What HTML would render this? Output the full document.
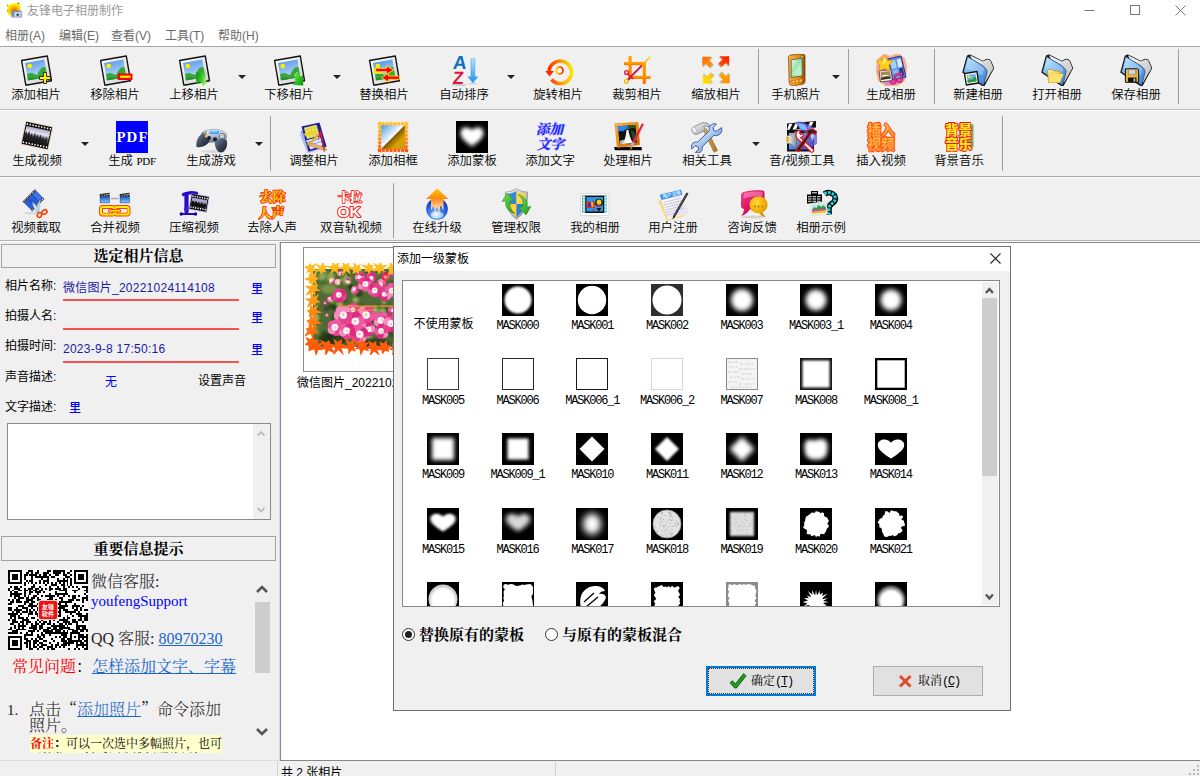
<!DOCTYPE html><html lang="zh-CN"><head><meta charset="utf-8"><title>友锋电子相册制作</title><style>
*{box-sizing:border-box;margin:0;padding:0}
html,body{width:1200px;height:776px;overflow:hidden;background:#fff}
body{position:relative;font-family:"Liberation Sans","Noto Sans CJK SC",sans-serif;font-size:12px;color:#000}
.abs{position:absolute}
.title{left:27px;top:2px;font-size:12px;color:#999;line-height:18px}
.menu{top:26px;left:0;height:20px;width:1200px}
.menu span{position:absolute;top:1px;line-height:19px;color:#6a6a6a;font-size:12px;white-space:nowrap}
.tbar{left:0;width:1200px;background:#f0f0f0}
.hl{left:0;width:1200px;height:1px}
.btn{position:absolute;width:100px;margin-left:-50px;text-align:center;white-space:nowrap;font-size:12px;line-height:14px;color:#000}
.btn svg{display:block;margin:0 auto;width:32px;height:32px}
.btn .lb{display:block;font-size:12.4px;font-weight:350}
.arr{position:absolute;width:0;height:0;border-left:4px solid transparent;border-right:4px solid transparent;border-top:4px solid #222}
.vsep{position:absolute;width:1px;background:#a0a0a0}
.hdr{left:1px;width:275px;height:24px;border:1px solid #a3a3a3;background:#f0f0f0;text-align:center;font-family:"Liberation Serif","Noto Serif CJK SC",serif;font-weight:bold;font-size:15px;line-height:23px}
.lab{position:absolute;font-size:12px;line-height:14px;white-space:nowrap}
.blue{color:#1a1aa6;letter-spacing:.25px}
.link{color:#0000ff;font-weight:500}
.cjk{font-family:"Noto Serif CJK SC",serif}
.redl{position:absolute;height:2px;background:#f65252;left:63px;width:176px}
.serif{font-family:"Liberation Serif","Noto Serif CJK SC",serif}
.mk{position:absolute;width:32px;height:32px;background:#000;overflow:hidden}
.ml{position:absolute;width:90px;margin-left:-45px;text-align:center;font-family:"Liberation Mono","Noto Serif CJK SC",monospace;font-size:12px;letter-spacing:-1.2px;line-height:12px;white-space:nowrap;color:#000}
</style></head><body>
<div class="abs" style="left:6px;top:3px;width:16px;height:16px"><svg viewBox="0 0 16 16" width="16" height="16" style="overflow:visible"><defs><radialGradient id="apg" cx=".55" cy=".6" r=".6"><stop offset="0" stop-color="#e85a00"/><stop offset=".35" stop-color="#ff9a00"/><stop offset=".7" stop-color="#ffe000"/><stop offset="1" stop-color="#ffff20"/></radialGradient><linearGradient id="apc" x1="0" y1="0" x2="1" y2="1"><stop offset="0" stop-color="#8aa0d0"/><stop offset=".5" stop-color="#c4d0e8"/><stop offset="1" stop-color="#98a8c8"/></linearGradient></defs><path d="M1 1.800L11.500-.2l2.800 2 .2 9-2.500 2-9.500-.3-1.200-4z" fill="url(#apg)"/><path d="M1 1.500l1.200.8-.8 1zM11 .2l2-.6 .6 1.600zM1.200 7l1.300.6-.8 1.200z" fill="#2a6a1a"/><rect x="5.400" y="7.900" width="10.400" height="6.400" rx=".7" fill="url(#apc)" stroke="#7a88a8" stroke-width=".5"/><rect x="6.500" y="8.600" width="1.300" height="5" fill="#5a6a98"/><rect x="9" y="9.300" width="4.800" height="4" fill="#d0daf0"/><path d="M10 12.500l1.300-2.300 1.700 1.300v1.300z" fill="#2a3450"/><rect x="9" y="8.200" width="5.500" height=".8" fill="#4a7ad8"/></svg></div>
<div class="abs title">友锋电子相册制作</div>
<svg class="abs" style="left:1070px;top:0" width="130" height="22" viewBox="0 0 130 22"><g stroke="#777" stroke-width="1" fill="none"><path d="M14.5 10.5h10"/><rect x="60.500" y="5.500" width="9" height="9"/><path d="M105.500 5.500l10 10M115.500 5.500l-10 10"/></g></svg>
<div class="abs menu">
<span style="left:5px">相册(A)</span>
<span style="left:59px">编辑(E)</span>
<span style="left:111px">查看(V)</span>
<span style="left:165px">工具(T)</span>
<span style="left:218px">帮助(H)</span>
</div>
<div class="abs tbar" style="top:46px;height:197px"></div>
<div class="abs hl" style="top:46px;background:#a5a5a5"></div>
<div class="abs hl" style="top:109px;background:#bdbdbd"></div>
<div class="abs hl" style="top:110px;background:#fbfbfb"></div>
<div class="abs hl" style="top:176px;background:#a8a8a8"></div>
<div class="abs hl" style="top:177px;background:#fbfbfb"></div>
<div class="abs hl" style="top:240px;background:#b4b4b4"></div>
<div class="abs hl" style="top:241px;background:#fbfbfb"></div>
<div class="btn" style="left:36px;top:54px"><svg viewBox="0 0 32 32" width="32" height="32" ><defs><linearGradient id="g1" x1="0" y1="0" x2="0.3" y2="1"><stop offset="0" stop-color="#4f93e6"/><stop offset="1" stop-color="#c4def8"/></linearGradient><linearGradient id="g2" x1="0" y1="0" x2="1" y2="1"><stop offset="0" stop-color="#fff"/><stop offset="1" stop-color="#cfcfcf"/></linearGradient><clipPath id="g3"><path d="M5 8.200L24.300 4.800 27.300 22.300 8 25.800z"/></clipPath></defs><g transform="translate(0 .8)"><path d="M6.500 31.200L32 26.800 32 25 6 29.500z" fill="#000" opacity=".55"/><path d="M1.600 5.700L27.300 1.200 31.500 25.800 5.800 30.300z" fill="url(#g2)" stroke="#111" stroke-width="1.400" stroke-linejoin="round"/><path d="M5 8.200L24.300 4.800 27.300 22.300 8 25.800z" fill="url(#g1)"/><g clip-path="url(#g3)"><path d="M5 21.500c2.500-3 5-4 7.500-3 1.500.5 3 1.300 4.500 1.700 2-3.500 4-8 7-8 1.500 0 3 1.500 4 4v12H6z" fill="#36a83a"/><path d="M6 24c4-1.500 8-1.500 11-.5 3-1.500 7-2.500 11-2v6H7z" fill="#228a2c" opacity=".85"/></g><circle cx="9.700" cy="11.200" r="2.300" fill="#fff200"/></g><path d="M19.500 22.500h4v-4h3v4h4v3h-4v4h-3v-4h-4z" fill="#fff200" stroke="#222" stroke-width=".9" stroke-linejoin="round"/></svg><span class="lb" style="margin-top:1.6px">添加相片</span></div>
<div class="btn" style="left:115px;top:54px"><svg viewBox="0 0 32 32" width="32" height="32" style="overflow:visible"><defs><linearGradient id="g4" x1="0" y1="0" x2="0.3" y2="1"><stop offset="0" stop-color="#4f93e6"/><stop offset="1" stop-color="#c4def8"/></linearGradient><linearGradient id="g5" x1="0" y1="0" x2="1" y2="1"><stop offset="0" stop-color="#fff"/><stop offset="1" stop-color="#cfcfcf"/></linearGradient><clipPath id="g6"><path d="M5 8.200L24.300 4.800 27.300 22.300 8 25.800z"/></clipPath></defs><g transform="translate(0 .8)"><path d="M6.500 31.200L32 26.800 32 25 6 29.500z" fill="#000" opacity=".55"/><path d="M1.600 5.700L27.300 1.200 31.500 25.800 5.800 30.300z" fill="url(#g5)" stroke="#111" stroke-width="1.400" stroke-linejoin="round"/><path d="M5 8.200L24.300 4.800 27.300 22.300 8 25.800z" fill="url(#g4)"/><g clip-path="url(#g6)"><path d="M5 21.500c2.500-3 5-4 7.500-3 1.500.5 3 1.300 4.500 1.700 2-3.500 4-8 7-8 1.500 0 3 1.500 4 4v12H6z" fill="#36a83a"/><path d="M6 24c4-1.500 8-1.500 11-.5 3-1.500 7-2.500 11-2v6H7z" fill="#228a2c" opacity=".85"/></g><circle cx="9.700" cy="11.200" r="2.300" fill="#fff200"/></g><rect x="18.500" y="19.500" width="15" height="6.500" rx="1" fill="#f00"/><rect x="21" y="21.600" width="10.500" height="2.300" fill="#ffef00"/></svg><span class="lb" style="margin-top:1.6px">移除相片</span></div>
<div class="btn" style="left:194px;top:54px"><svg viewBox="0 0 32 32" width="32" height="32" style="overflow:visible"><defs><linearGradient id="g7" x1="0" y1="0" x2="0.3" y2="1"><stop offset="0" stop-color="#4f93e6"/><stop offset="1" stop-color="#c4def8"/></linearGradient><linearGradient id="g8" x1="0" y1="0" x2="1" y2="1"><stop offset="0" stop-color="#fff"/><stop offset="1" stop-color="#cfcfcf"/></linearGradient><clipPath id="g9"><path d="M5 8.200L24.300 4.800 27.300 22.300 8 25.800z"/></clipPath></defs><g transform="translate(0 .8)"><path d="M6.500 31.200L32 26.800 32 25 6 29.500z" fill="#000" opacity=".55"/><path d="M1.600 5.700L27.300 1.200 31.500 25.800 5.800 30.300z" fill="url(#g8)" stroke="#111" stroke-width="1.400" stroke-linejoin="round"/><path d="M5 8.200L24.300 4.800 27.300 22.300 8 25.800z" fill="url(#g7)"/><g clip-path="url(#g9)"><path d="M5 21.500c2.500-3 5-4 7.500-3 1.500.5 3 1.300 4.500 1.700 2-3.500 4-8 7-8 1.500 0 3 1.500 4 4v12H6z" fill="#36a83a"/><path d="M6 24c4-1.500 8-1.500 11-.5 3-1.500 7-2.500 11-2v6H7z" fill="#228a2c" opacity=".85"/></g><circle cx="9.700" cy="11.200" r="2.300" fill="#fff200"/></g><defs><linearGradient id="upg" x1="0" y1="0" x2="1" y2=".3"><stop offset="0" stop-color="#089008"/><stop offset=".6" stop-color="#3cc828"/><stop offset="1" stop-color="#8af060"/></linearGradient></defs><path d="M18.200 18.200L28.500 19.200 26.200 22.800c1.600 2 2.200 4.300 1.800 6.700L24.900 32.100c.2-1.800-.8-3-3.100-4.100L18.200 29.500z" fill="url(#upg)"/></svg><span class="lb" style="margin-top:1.6px">上移相片</span></div>
<div class="btn" style="left:289px;top:54px"><svg viewBox="0 0 32 32" width="32" height="32" style="overflow:visible"><defs><linearGradient id="g10" x1="0" y1="0" x2="0.3" y2="1"><stop offset="0" stop-color="#4f93e6"/><stop offset="1" stop-color="#c4def8"/></linearGradient><linearGradient id="g11" x1="0" y1="0" x2="1" y2="1"><stop offset="0" stop-color="#fff"/><stop offset="1" stop-color="#cfcfcf"/></linearGradient><clipPath id="g12"><path d="M5 8.200L24.300 4.800 27.300 22.300 8 25.800z"/></clipPath></defs><g transform="translate(0 .8)"><path d="M6.500 31.200L32 26.800 32 25 6 29.500z" fill="#000" opacity=".55"/><path d="M1.600 5.700L27.300 1.200 31.500 25.800 5.800 30.300z" fill="url(#g11)" stroke="#111" stroke-width="1.400" stroke-linejoin="round"/><path d="M5 8.200L24.300 4.800 27.300 22.300 8 25.800z" fill="url(#g10)"/><g clip-path="url(#g12)"><path d="M5 21.500c2.500-3 5-4 7.500-3 1.500.5 3 1.300 4.500 1.700 2-3.500 4-8 7-8 1.500 0 3 1.500 4 4v12H6z" fill="#36a83a"/><path d="M6 24c4-1.500 8-1.500 11-.5 3-1.500 7-2.500 11-2v6H7z" fill="#228a2c" opacity=".85"/></g><circle cx="9.700" cy="11.200" r="2.300" fill="#fff200"/></g><defs><linearGradient id="dng" x1="0" y1="0" x2="1" y2="1"><stop offset="0" stop-color="#90f468"/><stop offset=".5" stop-color="#3cc828"/><stop offset="1" stop-color="#089008"/></linearGradient></defs><path d="M23.800 17.100c1.800 1.500 2.800 3.400 3.100 5.700L30 21.300 30.300 31.600 19.700 31 22.300 27.400c-.4-2.800-.9-5-1.600-7.200z" fill="url(#dng)"/><path d="M23.800 17.100l-3.100 3.100" stroke="#444" stroke-width=".8" opacity=".7"/></svg><span class="lb" style="margin-top:1.6px">下移相片</span></div>
<div class="btn" style="left:384px;top:54px"><svg viewBox="0 0 32 32" width="32" height="32" style="overflow:visible"><defs><linearGradient id="g13" x1="0" y1="0" x2="0.3" y2="1"><stop offset="0" stop-color="#3f8fe6"/><stop offset="1" stop-color="#c4def8"/></linearGradient><linearGradient id="g14" x1="0" y1="0" x2="1" y2="1"><stop offset="0" stop-color="#fff"/><stop offset="1" stop-color="#cfcfcf"/></linearGradient><clipPath id="g15"><path d="M5 8.200L24.300 4.800 27.300 22.300 8 25.800z"/></clipPath></defs><g transform="translate(0 .8)"><path d="M6.500 31.200L32 26.800 32 25 6 29.500z" fill="#000" opacity=".55"/><path d="M1.600 5.700L27.300 1.200 31.500 25.800 5.800 30.300z" fill="url(#g14)" stroke="#111" stroke-width="1.400" stroke-linejoin="round"/><path d="M5 8.200L24.300 4.800 27.300 22.300 8 25.800z" fill="url(#g13)"/><g clip-path="url(#g15)"><path d="M5 21.500c2.500-3 5-4 7.500-3 1.500.5 3 1.300 4.500 1.700 2-3.500 4-8 7-8 1.500 0 3 1.500 4 4v12H6z" fill="#36a83a"/><path d="M6 24c4-1.500 8-1.500 11-.5 3-1.500 7-2.500 11-2v6H7z" fill="#228a2c" opacity=".85"/></g><circle cx="9.700" cy="11.200" r="2.300" fill="#fff200"/></g><rect x="5.500" y="14" width="9" height="6" fill="#f2e21a" opacity=".9"/><path d="M7.500 14.300h11v-2.600l7 4.300-7 4.300v-2.600h-11z" fill="#f00" stroke="#ffe600" stroke-width=".9"/><path d="M31.500 22h-11v-2.600l-7 4.300 7 4.300v-2.600h11z" fill="#f00" stroke="#ffe600" stroke-width=".9"/></svg><span class="lb" style="margin-top:1.6px">替换相片</span></div>
<div class="btn" style="left:464px;top:54px"><svg viewBox="0 0 32 32" width="32" height="32" ><defs><linearGradient id="srt" x1="0" y1="0" x2="0" y2="1"><stop offset="0" stop-color="#b8e6ff"/><stop offset="1" stop-color="#1c8df0"/></linearGradient></defs><ellipse cx="11" cy="30.800" rx="8" ry="1.200" fill="#000" opacity=".15"/><ellipse cx="24.800" cy="29.500" rx="4.500" ry="1" fill="#000" opacity=".12"/><text x="11.200" y="15.300" font-family="Liberation Sans,sans-serif" font-weight="bold" font-size="18.800" text-anchor="middle" fill="#0b6dc4" transform="skewX(-6) translate(1.600 0)">A</text><text x="10.500" y="30.400" font-family="Liberation Sans,sans-serif" font-weight="bold" font-size="17.800" text-anchor="middle" fill="#e3123c" transform="skewX(-6) translate(2.500 0)">Z</text><path d="M23 4.800h3.800v18h3l-4.900 6-4.900-6h3z" fill="url(#srt)" stroke="#2a98f0" stroke-width=".5"/></svg><span class="lb" style="margin-top:1.6px">自动排序</span></div>
<div class="btn" style="left:558px;top:54px"><svg viewBox="0 0 32 32" width="32" height="32" ><defs><linearGradient id="rot" x1="0" y1="0" x2="1" y2="0"><stop offset="0" stop-color="#ff3000"/><stop offset=".5" stop-color="#ff9400"/><stop offset="1" stop-color="#ffe000"/></linearGradient><linearGradient id="rot2" x1="0" y1="0" x2="1" y2="0"><stop offset="0" stop-color="#ffd800"/><stop offset="1" stop-color="#ff2a00"/></linearGradient></defs><path d="M7 18.500A11.250 11.250 0 1 1 9.600 25.500" fill="none" stroke="url(#rot)" stroke-width="3.600"/><path d="M3.200 17l8.800 0-4.400 5.600z" fill="#ff3000"/><circle cx="17.600" cy="16.400" r="3.400" fill="#f4f4f4" stroke="url(#rot2)" stroke-width="1.800"/></svg><span class="lb" style="margin-top:1.6px">旋转相片</span></div>
<div class="btn" style="left:637px;top:54px"><svg viewBox="0 0 32 32" width="32" height="32" ><defs><linearGradient id="crp" x1="0" y1="0" x2="0" y2="1"><stop offset="0" stop-color="#ffa800"/><stop offset="1" stop-color="#ff7400"/></linearGradient><linearGradient id="crl" x1="1" y1="0" x2="0" y2="1"><stop offset="0" stop-color="#ffe000"/><stop offset=".5" stop-color="#ff8000"/><stop offset=".8" stop-color="#7a1fa0"/><stop offset="1" stop-color="#e00020"/></linearGradient></defs><g fill="url(#crp)"><rect x="7.500" y="2" width="3.200" height="22"/><rect x="3" y="8" width="22" height="3.200"/><rect x="21.700" y="8" width="3.200" height="22"/><rect x="7.500" y="21.800" width="22" height="3.200"/></g><path d="M29.500 2.500L7 25.500" stroke="url(#crl)" stroke-width="1.300" fill="none"/><path d="M21 11.500L7 25.500" stroke="#c02060" stroke-width="1.800" fill="none"/><circle cx="5.500" cy="18.500" r="1.900" fill="none" stroke="#e8102a" stroke-width="1.300"/><circle cx="5.500" cy="27.200" r="1.900" fill="none" stroke="#f2b800" stroke-width="1.300"/><path d="M6.500 20l6 5M7 26l4-3" stroke="#e8102a" stroke-width="1.200" fill="none"/></svg><span class="lb" style="margin-top:1.6px">裁剪相片</span></div>
<div class="btn" style="left:716px;top:54px"><svg viewBox="0 0 32 32" width="32" height="32" ><defs><linearGradient id="g16" x1="0" y1="0" x2="1" y2="1"><stop offset="0" stop-color="#ff6a00"/><stop offset="1" stop-color="#ff9a00"/></linearGradient></defs><g transform="rotate(0 16 16)"><path d="M2.300 2.800h9.700l-3.200 3.200 4.200 4.200-3.400 3.400-4.200-4.200-3.100 3.100z" fill="#000" opacity=".22" transform="translate(.8 .9)"/><path d="M2.300 2.800h9.700l-3.200 3.200 4.200 4.200-3.400 3.400-4.200-4.200-3.100 3.100z" fill="url(#g16)"/></g><defs><linearGradient id="g17" x1="0" y1="0" x2="1" y2="1"><stop offset="0" stop-color="#ff1a00"/><stop offset="1" stop-color="#ff5a00"/></linearGradient></defs><g transform="rotate(90 16 16)"><path d="M2.300 2.800h9.700l-3.200 3.200 4.200 4.200-3.400 3.400-4.200-4.200-3.100 3.100z" fill="#000" opacity=".22" transform="translate(.8 .9)"/><path d="M2.300 2.800h9.700l-3.200 3.200 4.200 4.200-3.400 3.400-4.200-4.200-3.100 3.100z" fill="url(#g17)"/></g><defs><linearGradient id="g18" x1="0" y1="0" x2="1" y2="1"><stop offset="0" stop-color="#ffe600"/><stop offset="1" stop-color="#ffc400"/></linearGradient></defs><g transform="rotate(270 16 16)"><path d="M2.300 2.800h9.700l-3.200 3.200 4.200 4.200-3.400 3.400-4.200-4.200-3.100 3.100z" fill="#000" opacity=".22" transform="translate(.8 .9)"/><path d="M2.300 2.800h9.700l-3.200 3.200 4.200 4.200-3.400 3.400-4.200-4.200-3.100 3.100z" fill="url(#g18)"/></g><defs><linearGradient id="g19" x1="0" y1="0" x2="1" y2="1"><stop offset="0" stop-color="#ff8a00"/><stop offset="1" stop-color="#ffb000"/></linearGradient></defs><g transform="rotate(180 16 16)"><path d="M2.300 2.800h9.700l-3.200 3.200 4.200 4.200-3.400 3.400-4.200-4.200-3.100 3.100z" fill="#000" opacity=".22" transform="translate(.8 .9)"/><path d="M2.300 2.800h9.700l-3.200 3.200 4.200 4.200-3.400 3.400-4.200-4.200-3.100 3.100z" fill="url(#g19)"/></g></svg><span class="lb" style="margin-top:1.6px">缩放相片</span></div>
<div class="btn" style="left:796px;top:54px"><svg viewBox="0 0 32 32" width="32" height="32" ><defs><linearGradient id="ph1" x1="0" y1="0" x2="1" y2="0"><stop offset="0" stop-color="#ffb74a"/><stop offset=".6" stop-color="#f08a1a"/><stop offset="1" stop-color="#8a4a08"/></linearGradient><linearGradient id="ph2" x1="0" y1="0" x2="1" y2="1"><stop offset="0" stop-color="#e9fff0"/><stop offset=".5" stop-color="#8fdca8"/><stop offset="1" stop-color="#d8ffe4"/></linearGradient></defs><path d="M8.500 3.500c0-1.500 1-2.300 2.500-2.500l11-1c2-.2 3 .8 3 2.500v24.500c0 2-1 3-2.500 3.300l-9 1.500c-2.500.3-4-.7-4.300-3z" fill="url(#ph1)" stroke="#7a4206" stroke-width=".8"/><path d="M11.200 5.800l11-1.500v17.500l-11 1.800z" fill="url(#ph2)" stroke="#4a5a3a" stroke-width=".8"/><path d="M11.500 21l9-13v13z" fill="#bff0cc" opacity=".8"/><path d="M10.500 26.500l12-2v3.500l-9 1.800c-1.800.2-2.800-1-3-3.300z" fill="#d87a10"/><circle cx="13.500" cy="27.800" r="1" fill="#ffe28a"/><circle cx="17" cy="27.200" r="1" fill="#ffe28a"/><circle cx="20.500" cy="26.600" r="1" fill="#ffe28a"/><circle cx="22.300" cy="2.800" r=".9" fill="#7dff5a"/></svg><span class="lb" style="margin-top:1.6px">手机照片</span></div>
<div class="btn" style="left:891px;top:54px"><svg viewBox="0 0 32 32" width="32" height="32" ><defs><radialGradient id="alg" cx=".5" cy=".5" r=".5"><stop offset=".75" stop-color="#ff60c0" stop-opacity=".9"/><stop offset="1" stop-color="#ffb000" stop-opacity="0"/></radialGradient></defs><path d="M3 6l6-5 7 2 6-3 7 5 2 9-2 12-7 5-10 1-8-6-2-9z" fill="none" stroke="#ff7a2a" stroke-width="2.200" opacity=".55" stroke-linejoin="round"/><path d="M4 7l5-5 7 2 6-2.500 6 4.500 2 9-2 11-7 4.500-9 .5-7-5.500-2-8z" fill="#d85cc8" opacity=".75"/><path d="M4.500 5l7-1 .5 3z" fill="#3fd070"/><path d="M13 5l13-3 5 21-13 4z" fill="#5a8fe0" stroke="#25357a" stroke-width="1"/><path d="M15 7l5-1.300 2 8-5 1.500z" fill="#a8d0ff"/><path d="M21.500 5.500l4-1 2 8-4 1.300z" fill="#dfe8ff"/><path d="M17.500 16.500l5-1.500 2 8-5 1.700z" fill="#8ab8f8"/><path d="M24 14.500l3.500-1 1.800 8-3.500 1.200z" fill="#2a3a8a"/><path d="M4 17l12-1.500 1.500 11-12 1.500z" fill="#f4efe6" stroke="#55453a" stroke-width=".9"/><path d="M5.500 18.300l9.500-1.200 1 7-9.500 1.300z" fill="#a88a5a"/><ellipse cx="10.500" cy="22.500" rx="3.500" ry="1.800" fill="#f2f2e6"/><path d="M6 24.500c2-2 6-3 9.500-1.500l.3 1.600-9.500 1.300z" fill="#3a3a2a"/><path d="M9.500 1l2.800 5.200 5.700.8-4.100 4.200 1 5.800-5.400-2.800-5.300 2.800 1-5.800-4.200-4.200 5.800-.8z" fill="#ffd21a" stroke="#e89a00" stroke-width=".8"/><path d="M9.500 3l1.800 4-3.800 4z" fill="#fff27a"/><path d="M19.500 20.500l8-2.500v8.500a3 2.200 0 1 1-1.500-2v-4l-5 1.500v6a3 2.200 0 1 1-1.500-2z" fill="#f040a0" stroke="#8a1060" stroke-width=".7"/></svg><span class="lb" style="margin-top:1.6px">生成相册</span></div>
<div class="btn" style="left:978px;top:54px"><svg viewBox="0 0 32 32" width="32" height="32" ><defs><linearGradient id="g20" x1="0" y1="0" x2="1" y2="1"><stop offset="0" stop-color="#b8e4ff"/><stop offset=".45" stop-color="#6aaef0"/><stop offset="1" stop-color="#3a7cd8"/></linearGradient><linearGradient id="g21" x1="0" y1="0" x2="1" y2="1"><stop offset="0" stop-color="#fff"/><stop offset="1" stop-color="#b8b8b8"/></linearGradient></defs><path d="M5.400 2L7.800 1l13.200 6.500 3.500-1.800c1.800-.6 3.300.3 4.200 1.800l2.800 6.600L21.700 32.200.9 18.300z" fill="#111" stroke="#111" stroke-width="1.300" stroke-linejoin="round"/><path d="M7.800 1.200l13.200 6.400 3.500-1.800c1.800-.6 3.300.3 4.200 1.800l2.700 6.500-8.500 15z" fill="url(#g21)"/><path d="M22 8.500l7 9M24 7l6.500 8.500M20 9.500l7 9.500" stroke="#d0d0d0" stroke-width=".8" fill="none"/><path d="M5.600 2.600l13.400 8c3.500 2 5.800 4.600 6.200 7l-3.600 14L1.500 18z" fill="url(#g20)" stroke="#1a2a4a" stroke-width=".6" stroke-linejoin="round"/><path d="M6.300 4l11.500 7c2 1.200 3.500 2.500 4.500 4l-2 6.500L4 14.500z" fill="#e0f4ff" opacity=".35"/><g transform="translate(2.5 17.5)"><path d="M0 2.200L12.500 0 14 11.500 1.800 13.500z" fill="#f2f2f2" stroke="#111" stroke-width="1.300" stroke-linejoin="round"/><path d="M2.300 3.800L11 2.300 12 9.800 3.300 11.300z" fill="#6fb0f0"/><path d="M3 9c2-2 3-1.500 4.500-.5 1.500-2.500 3-3.500 4.200-2.500l.4 3.800-8.800 1.500z" fill="#2a9a30"/><circle cx="4.800" cy="5.300" r="1.200" fill="#fff200"/></g></svg><span class="lb" style="margin-top:1.6px">新建相册</span></div>
<div class="btn" style="left:1057px;top:54px"><svg viewBox="0 0 32 32" width="32" height="32" ><defs><linearGradient id="g23" x1="0" y1="0" x2="1" y2="1"><stop offset="0" stop-color="#b8e4ff"/><stop offset=".45" stop-color="#6aaef0"/><stop offset="1" stop-color="#3a7cd8"/></linearGradient><linearGradient id="g24" x1="0" y1="0" x2="1" y2="1"><stop offset="0" stop-color="#fff"/><stop offset="1" stop-color="#b8b8b8"/></linearGradient></defs><path d="M5.400 2L7.800 1l13.200 6.500 3.500-1.800c1.800-.6 3.300.3 4.200 1.800l2.800 6.600L21.700 32.200.9 18.300z" fill="#111" stroke="#111" stroke-width="1.300" stroke-linejoin="round"/><path d="M7.800 1.200l13.200 6.400 3.500-1.800c1.800-.6 3.300.3 4.200 1.800l2.700 6.500-8.500 15z" fill="url(#g24)"/><path d="M22 8.500l7 9M24 7l6.500 8.500M20 9.500l7 9.500" stroke="#d0d0d0" stroke-width=".8" fill="none"/><path d="M5.600 2.600l13.400 8c3.500 2 5.800 4.600 6.200 7l-3.600 14L1.500 18z" fill="url(#g23)" stroke="#1a2a4a" stroke-width=".6" stroke-linejoin="round"/><path d="M6.300 4l11.500 7c2 1.200 3.500 2.500 4.500 4l-2 6.500L4 14.500z" fill="#e0f4ff" opacity=".35"/><defs><linearGradient id="opf" x1="0" y1="0" x2="1" y2="1"><stop offset="0" stop-color="#fff0a0"/><stop offset="1" stop-color="#e0a410"/></linearGradient></defs><path d="M6.500 17c0-1 .5-1.500 1.500-1.500h3.500l1.500 1.500h6l.5 3h2.500l-3.500 8.500H7.500z" fill="url(#opf)" stroke="#c08a10" stroke-width=".7"/><path d="M9.500 20h13l-3.500 8.500H7.500z" fill="#ffe470" opacity=".9"/></svg><span class="lb" style="margin-top:1.6px">打开相册</span></div>
<div class="btn" style="left:1136px;top:54px"><svg viewBox="0 0 32 32" width="32" height="32" ><defs><linearGradient id="g25" x1="0" y1="0" x2="1" y2="1"><stop offset="0" stop-color="#b8e4ff"/><stop offset=".45" stop-color="#6aaef0"/><stop offset="1" stop-color="#3a7cd8"/></linearGradient><linearGradient id="g26" x1="0" y1="0" x2="1" y2="1"><stop offset="0" stop-color="#fff"/><stop offset="1" stop-color="#b8b8b8"/></linearGradient></defs><path d="M5.400 2L7.800 1l13.200 6.500 3.500-1.800c1.800-.6 3.300.3 4.200 1.800l2.800 6.600L21.700 32.200.9 18.300z" fill="#111" stroke="#111" stroke-width="1.300" stroke-linejoin="round"/><path d="M7.800 1.200l13.200 6.400 3.500-1.800c1.800-.6 3.300.3 4.200 1.800l2.700 6.500-8.500 15z" fill="url(#g26)"/><path d="M22 8.500l7 9M24 7l6.500 8.500M20 9.500l7 9.500" stroke="#d0d0d0" stroke-width=".8" fill="none"/><path d="M5.600 2.600l13.400 8c3.500 2 5.800 4.600 6.200 7l-3.600 14L1.500 18z" fill="url(#g25)" stroke="#1a2a4a" stroke-width=".6" stroke-linejoin="round"/><path d="M6.300 4l11.500 7c2 1.200 3.500 2.500 4.500 4l-2 6.500L4 14.500z" fill="#e0f4ff" opacity=".35"/><path d="M5.400 14.800h12.200l1 1v12.500H5.400z" fill="#e8b830" stroke="#111" stroke-width="1"/><rect x="8" y="15.500" width="8.500" height="5.200" fill="#8a8a8a"/><rect x="8.800" y="16" width="6.500" height="4.200" fill="#d4d4d4"/><rect x="8" y="23.600" width="8.500" height="4.500" fill="#111"/><rect x="13.500" y="24.500" width="1.800" height="3" fill="#c8c8c8"/></svg><span class="lb" style="margin-top:1.6px">保存相册</span></div>
<div class="arr" style="left:238px;top:75px"></div>
<div class="arr" style="left:333px;top:75px"></div>
<div class="arr" style="left:507px;top:75px"></div>
<div class="arr" style="left:832px;top:75px"></div>
<div class="vsep" style="left:758px;top:49px;height:55px"></div>
<div class="vsep" style="left:848px;top:49px;height:55px"></div>
<div class="vsep" style="left:934px;top:49px;height:55px"></div>
<div class="vsep" style="left:1178px;top:49px;height:55px"></div>
<div class="btn" style="left:37px;top:121px"><svg viewBox="0 0 32 32" width="32" height="32" ><defs><linearGradient id="vdg" x1="0" y1="0" x2="0" y2="1"><stop offset="0" stop-color="#a9a4c8"/><stop offset=".35" stop-color="#e8e6f2"/><stop offset=".6" stop-color="#6a6a72"/><stop offset="1" stop-color="#15151a"/></linearGradient></defs><g transform="translate(5.300 .8) rotate(12)"><rect x="-1" y="-1" width="28.500" height="24.500" fill="#d8c890" opacity=".55" rx="1"/><rect x="0" y="0" width="26.5" height="22.5" fill="#0c0c0c"/><rect x="1" y="4" width="24.500" height="14.500" fill="url(#vdg)"/><path d="M1 18.500V12l1.500-3 1 4 1.500-5 1.500 5 1.500-3 1.500 4 1.500-5.500 1.500 5 1.500-3.500 1.500 4 1.500-5 1.500 5 1.500-3 1.500 3.500 1.500-4 1 3.500v6z" fill="#1a1a1e" opacity=".85"/><rect x="0.74" y="1.100" width="1.47" height="1.700" rx=".4" fill="#fff"/><rect x="0.74" y="19.70" width="1.47" height="1.700" rx=".4" fill="#fff"/><rect x="3.68" y="1.100" width="1.47" height="1.700" rx=".4" fill="#fff"/><rect x="3.68" y="19.70" width="1.47" height="1.700" rx=".4" fill="#fff"/><rect x="6.62" y="1.100" width="1.47" height="1.700" rx=".4" fill="#fff"/><rect x="6.62" y="19.70" width="1.47" height="1.700" rx=".4" fill="#fff"/><rect x="9.57" y="1.100" width="1.47" height="1.700" rx=".4" fill="#fff"/><rect x="9.57" y="19.70" width="1.47" height="1.700" rx=".4" fill="#fff"/><rect x="12.51" y="1.100" width="1.47" height="1.700" rx=".4" fill="#fff"/><rect x="12.51" y="19.70" width="1.47" height="1.700" rx=".4" fill="#fff"/><rect x="15.46" y="1.100" width="1.47" height="1.700" rx=".4" fill="#fff"/><rect x="15.46" y="19.70" width="1.47" height="1.700" rx=".4" fill="#fff"/><rect x="18.40" y="1.100" width="1.47" height="1.700" rx=".4" fill="#fff"/><rect x="18.40" y="19.70" width="1.47" height="1.700" rx=".4" fill="#fff"/><rect x="21.35" y="1.100" width="1.47" height="1.700" rx=".4" fill="#fff"/><rect x="21.35" y="19.70" width="1.47" height="1.700" rx=".4" fill="#fff"/><rect x="24.29" y="1.100" width="1.47" height="1.700" rx=".4" fill="#fff"/><rect x="24.29" y="19.70" width="1.47" height="1.700" rx=".4" fill="#fff"/></g></svg><span class="lb" style="margin-top:1px">生成视频</span></div>
<div class="btn" style="left:132px;top:121px"><svg viewBox="0 0 32 32" width="32" height="32" ><rect width="32" height="32" fill="#0000ff"/><text x="16.500" y="20.800" font-family="Liberation Serif,serif" font-weight="bold" font-size="14.800" text-anchor="middle" fill="#fff" letter-spacing="1.100">PDF</text></svg><span class="lb" style="margin-top:1px">生成 <span style="font-family:Liberation Serif,serif;font-size:11px;letter-spacing:-.3px;font-weight:400">PDF</span></span></div>
<div class="btn" style="left:211px;top:121px"><svg viewBox="0 0 32 32" width="32" height="32" style="overflow:visible"><defs><linearGradient id="gm1" x1="0" y1="0" x2=".3" y2="1"><stop offset="0" stop-color="#fafbfd"/><stop offset=".6" stop-color="#b4bccc"/><stop offset="1" stop-color="#6a7488"/></linearGradient><linearGradient id="gm2" x1="0" y1="0" x2="1" y2="1"><stop offset="0" stop-color="#7a879a"/><stop offset=".5" stop-color="#3c4656"/><stop offset="1" stop-color="#161c26"/></linearGradient></defs><ellipse cx="18" cy="30.500" rx="12" ry="1.500" fill="#000" opacity=".1"/><path d="M6.500 12C10 7.500 26 6.500 31 12.500c1.500 3 .5 6.500-3 8L12 21.500c-3-2-5-6-5.500-9.500z" fill="url(#gm1)" stroke="#7a8498" stroke-width=".5"/><path d="M1.500 26C.5 20 3.500 14.500 8 12l6.500 8c-2 4-7.500 7-13 6z" fill="url(#gm2)"/><path d="M19.700 21c3.500-3.500 9.500-4.500 12-1.500 1.500 5-1 11-5.500 12-4 0-6.500-5-6.500-10.500z" fill="url(#gm2)"/><rect x="14.500" y="9.800" width="9.500" height="3.200" rx="1.200" fill="#3ea0f4"/><rect x="15.500" y="10.300" width="7" height="1" rx=".5" fill="#a8dcff"/><circle cx="14" cy="17" r="1.900" fill="#1a1e28"/><circle cx="20" cy="18.200" r="2" fill="#1a1e28"/><circle cx="27" cy="15" r="2.600" fill="#e8ecf2" stroke="#5a6478" stroke-width=".9"/><circle cx="27.300" cy="14.800" r=".9" fill="#8a94a8"/><circle cx="10.700" cy="11" r="1.100" fill="#2ac83a"/><circle cx="10.200" cy="13.300" r="1.100" fill="#e82a2a"/><circle cx="11" cy="15.400" r="1.100" fill="#f2d21a"/><circle cx="8.200" cy="12.200" r="1" fill="#2a6ae8"/></svg><span class="lb" style="margin-top:1px">生成游戏</span></div>
<div class="btn" style="left:314px;top:121px"><svg viewBox="0 0 32 32" width="32" height="32" ><path d="M2.500 10.500l18-7 8 22-18 6z" fill="#5a6ad8" opacity=".7"/><path d="M1.500 13l18-7 8 21-18 5.500z" fill="#aab8f0" opacity=".8"/><path d="M3.500 5.500l18-4 7 24-18 5z" fill="#1c1c96"/><path d="M6 6.800l12.500-3 3 11-12.500 3.300z" fill="#d8e890"/><path d="M6.500 9l13-3M7.500 12.500l13-3.300M9.200 5.800l3 11.200M12.500 5l3 11.200M15.700 4.200l3 11.200" stroke="#f2c81a" stroke-width="1.200" fill="none"/><path d="M6 12.500l12-3 .8 3-12 3z" fill="#f2d020" opacity=".9"/><path d="M8 19.500l14-4 2.500 9-12 4z" fill="#e8ecff"/><path d="M9 21.500l13-3.800M10 24.500l13-3.800" stroke="#8a9ae0" stroke-width="1" fill="none"/><path d="M10 21l17 5.500 2 2.500-3 .5-17-5.500z" fill="#e8b078" stroke="#b07840" stroke-width=".5"/><path d="M10 24l1 .8L20.500 15l-1.500-1.500z" fill="#f2c21a" stroke="#a87a10" stroke-width=".5"/><path d="M9 26l1-2 1 .8z" fill="#333"/><path d="M19 13.500l1.500 1.500 1.500-1.500-1.500-1.500z" fill="#e87aa0"/><path d="M22 10.500l1-.2 3.500 19-.6.2zM22 10.500l-1.500 8" stroke="#c8203a" stroke-width=".9" fill="#c8203a"/><path d="M25.500 27l1.200 4" stroke="#b08a5a" stroke-width="1.200"/></svg><span class="lb" style="margin-top:1px">调整相片</span></div>
<div class="btn" style="left:393px;top:121px"><svg viewBox="0 0 32 32" width="32" height="32" ><defs><linearGradient id="fr1" x1="0" y1="0" x2=".5" y2=".5"><stop offset="0" stop-color="#3f90d8"/><stop offset=".45" stop-color="#9cc8ec"/><stop offset="1" stop-color="#fff"/></linearGradient><linearGradient id="fr2" x1=".5" y1=".5" x2="1" y2="1"><stop offset="0" stop-color="#7a5600"/><stop offset=".45" stop-color="#d8a000"/><stop offset="1" stop-color="#c09a30"/></linearGradient></defs><path d="M3.800 3.800h24.400L3.800 28.200z" fill="url(#fr1)"/><path d="M28.200 3.800v24.400H3.800z" fill="url(#fr2)"/><defs><linearGradient id="g27" x1="0" y1="0" x2="0" y2="32" gradientUnits="userSpaceOnUse"><stop offset="0" stop-color="#ffc824"/><stop offset=".5" stop-color="#ff9a18"/><stop offset="1" stop-color="#ff4a08"/></linearGradient></defs><g fill="url(#g27)"><polygon points="2.6,0.2 3.4,1.6 5.0,1.9 3.9,3.1 4.1,4.7 2.6,4.1 1.1,4.7 1.3,3.1 0.2,1.9 1.8,1.6"/><polygon points="2.6,26.8 3.4,28.2 5.0,28.5 3.9,29.7 4.1,31.3 2.6,30.7 1.1,31.3 1.3,29.7 0.2,28.5 1.8,28.2"/><polygon points="2.7,0.1 3.5,1.5 5.1,1.8 4.0,3.0 4.2,4.6 2.7,4.0 1.2,4.6 1.4,3.0 0.3,1.8 1.9,1.5"/><polygon points="29.3,0.1 30.1,1.5 31.7,1.8 30.6,3.0 30.8,4.6 29.3,4.0 27.8,4.6 28.0,3.0 26.9,1.8 28.5,1.5"/><polygon points="6.4,0.2 7.2,1.6 8.8,1.9 7.7,3.1 7.9,4.7 6.4,4.1 5.0,4.7 5.1,3.1 4.1,1.9 5.6,1.6"/><polygon points="6.4,26.8 7.2,28.2 8.8,28.5 7.7,29.7 7.9,31.3 6.4,30.7 5.0,31.3 5.1,29.7 4.1,28.5 5.6,28.2"/><polygon points="2.7,3.9 3.5,5.3 5.1,5.7 4.0,6.8 4.2,8.5 2.7,7.8 1.2,8.5 1.4,6.8 0.3,5.7 1.9,5.3"/><polygon points="29.3,3.9 30.1,5.3 31.7,5.7 30.6,6.8 30.8,8.5 29.3,7.8 27.8,8.5 28.0,6.8 26.9,5.7 28.5,5.3"/><polygon points="10.3,0.2 11.1,1.6 12.6,1.9 11.5,3.1 11.7,4.7 10.3,4.1 8.8,4.7 9.0,3.1 7.9,1.9 9.5,1.6"/><polygon points="10.3,26.8 11.1,28.2 12.6,28.5 11.5,29.7 11.7,31.3 10.3,30.7 8.8,31.3 9.0,29.7 7.9,28.5 9.5,28.2"/><polygon points="2.7,7.8 3.5,9.2 5.1,9.5 4.0,10.7 4.2,12.3 2.7,11.6 1.2,12.3 1.4,10.7 0.3,9.5 1.9,9.2"/><polygon points="29.3,7.8 30.1,9.2 31.7,9.5 30.6,10.7 30.8,12.3 29.3,11.6 27.8,12.3 28.0,10.7 26.9,9.5 28.5,9.2"/><polygon points="14.1,0.2 14.9,1.6 16.5,1.9 15.4,3.1 15.6,4.7 14.1,4.1 12.6,4.7 12.8,3.1 11.7,1.9 13.3,1.6"/><polygon points="14.1,26.8 14.9,28.2 16.5,28.5 15.4,29.7 15.6,31.3 14.1,30.7 12.6,31.3 12.8,29.7 11.7,28.5 13.3,28.2"/><polygon points="2.7,11.6 3.5,13.0 5.1,13.3 4.0,14.5 4.2,16.1 2.7,15.4 1.2,16.1 1.4,14.5 0.3,13.3 1.9,13.0"/><polygon points="29.3,11.6 30.1,13.0 31.7,13.3 30.6,14.5 30.8,16.1 29.3,15.4 27.8,16.1 28.0,14.5 26.9,13.3 28.5,13.0"/><polygon points="17.9,0.2 18.7,1.6 20.3,1.9 19.2,3.1 19.4,4.7 17.9,4.1 16.4,4.7 16.6,3.1 15.5,1.9 17.1,1.6"/><polygon points="17.9,26.8 18.7,28.2 20.3,28.5 19.2,29.7 19.4,31.3 17.9,30.7 16.4,31.3 16.6,29.7 15.5,28.5 17.1,28.2"/><polygon points="2.7,15.4 3.5,16.8 5.1,17.1 4.0,18.3 4.2,19.9 2.7,19.3 1.2,19.9 1.4,18.3 0.3,17.1 1.9,16.8"/><polygon points="29.3,15.4 30.1,16.8 31.7,17.1 30.6,18.3 30.8,19.9 29.3,19.3 27.8,19.9 28.0,18.3 26.9,17.1 28.5,16.8"/><polygon points="21.7,0.2 22.5,1.6 24.1,1.9 23.0,3.1 23.2,4.7 21.7,4.1 20.3,4.7 20.5,3.1 19.4,1.9 20.9,1.6"/><polygon points="21.7,26.8 22.5,28.2 24.1,28.5 23.0,29.7 23.2,31.3 21.7,30.7 20.3,31.3 20.5,29.7 19.4,28.5 20.9,28.2"/><polygon points="2.7,19.2 3.5,20.7 5.1,21.0 4.0,22.2 4.2,23.8 2.7,23.1 1.2,23.8 1.4,22.2 0.3,21.0 1.9,20.7"/><polygon points="29.3,19.2 30.1,20.7 31.7,21.0 30.6,22.2 30.8,23.8 29.3,23.1 27.8,23.8 28.0,22.2 26.9,21.0 28.5,20.7"/><polygon points="25.6,0.2 26.4,1.6 27.9,1.9 26.9,3.1 27.0,4.7 25.6,4.1 24.1,4.7 24.3,3.1 23.2,1.9 24.8,1.6"/><polygon points="25.6,26.8 26.4,28.2 27.9,28.5 26.9,29.7 27.0,31.3 25.6,30.7 24.1,31.3 24.3,29.7 23.2,28.5 24.8,28.2"/><polygon points="2.7,23.1 3.5,24.5 5.1,24.8 4.0,26.0 4.2,27.6 2.7,26.9 1.2,27.6 1.4,26.0 0.3,24.8 1.9,24.5"/><polygon points="29.3,23.1 30.1,24.5 31.7,24.8 30.6,26.0 30.8,27.6 29.3,26.9 27.8,27.6 28.0,26.0 26.9,24.8 28.5,24.5"/><polygon points="29.4,0.2 30.2,1.6 31.8,1.9 30.7,3.1 30.9,4.7 29.4,4.1 27.9,4.7 28.1,3.1 27.0,1.9 28.6,1.6"/><polygon points="29.4,26.8 30.2,28.2 31.8,28.5 30.7,29.7 30.9,31.3 29.4,30.7 27.9,31.3 28.1,29.7 27.0,28.5 28.6,28.2"/><polygon points="2.7,26.9 3.5,28.3 5.1,28.6 4.0,29.8 4.2,31.4 2.7,30.8 1.2,31.4 1.4,29.8 0.3,28.6 1.9,28.3"/><polygon points="29.3,26.9 30.1,28.3 31.7,28.6 30.6,29.8 30.8,31.4 29.3,30.8 27.8,31.4 28.0,29.8 26.9,28.6 28.5,28.3"/></g></svg><span class="lb" style="margin-top:1px">添加相框</span></div>
<div class="btn" style="left:472px;top:121px"><svg viewBox="0 0 32 32" width="32" height="32" ><defs><filter id="mkb" x="-30%" y="-30%" width="160%" height="160%"><feGaussianBlur stdDeviation="2.100"/></filter></defs><rect width="32" height="32" fill="#000"/><path d="M16 25.500C9 20 4.500 16.500 4.500 12 4.500 8.500 7 6.500 10 6.500c2.500 0 4.800 1.500 6 3.500C17.200 8 19.500 6.500 22 6.500c3 0 5.500 2 5.500 5.500 0 4.500-4.500 8-11.500 13.500z" fill="#fff" filter="url(#mkb)"/><path d="M16 19.500C12 17 8.500 15 8.500 12c0-1.500 1-2.500 2.500-2.500s3.500 1 5 3c1.500-2 3.500-3 5-3s2.500 1 2.500 2.500c0 3-3.500 5-7.500 7.500z" fill="#fff" filter="url(#mkb)"/></svg><span class="lb" style="margin-top:1px">添加蒙板</span></div>
<div class="btn" style="left:550px;top:121px"><svg viewBox="0 0 32 32" width="32" height="32" style="overflow:visible"><g font-family="Liberation Serif,Noto Serif CJK SC,serif" font-weight="700" font-style="italic" font-size="13.500" text-anchor="middle" fill="#2020ff" stroke="#b0b0ff" stroke-width="1.100" paint-order="stroke"><text x="15.500" y="13">添加</text><text x="16.500" y="27.500">文字</text></g></svg><span class="lb" style="margin-top:1px">添加文字</span></div>
<div class="btn" style="left:628px;top:121px"><svg viewBox="0 0 32 32" width="32" height="32" style="overflow:visible"><defs><linearGradient id="pr1" x1="0" y1="0" x2="1" y2="1"><stop offset="0" stop-color="#ffb850"/><stop offset=".5" stop-color="#f28a10"/><stop offset="1" stop-color="#c06000"/></linearGradient></defs><path d="M2 26h27.500l.5 3.300H3z" fill="#000"/><path d="M3 2.700L26 1.200l1.700 22.600L5.200 26.600z" fill="url(#pr1)" stroke="#d87a08" stroke-width=".5"/><path d="M5.700 5.200L23.500 4l1.400 17.400L7.700 23.600z" fill="#10160e"/><path d="M5.700 5.200L16 4.500l-.5 3.500c-2 .3-3.500 1.300-5 2.500-1.500-.8-3-.6-4.500.2z" fill="#2a86ee"/><path d="M16 4.500l7.500-.5.300 3.500c-2-1-4-1-6 .5l-2.300.2z" fill="#2a5a2a"/><path d="M14.500 9l1.800-.3c.8 4 1.700 7.500 3.200 10.800l2 2.200-11 1.400c2.500-4 3.600-8.500 4-14.100z" fill="#fff"/><path d="M8 20c2-1 4-1.500 6-1l-1 3.800-5 .6z" fill="#d8e0e0" opacity=".8"/><path d="M19 9c2 .5 3.500 2 4.500 4.500l.5 5-3 .5c-1-3-1.700-6.500-2-10z" fill="#1e4a20"/><path d="M30 2.200l1.600 1L22.600 22l-2.400-1.300z" fill="#d8203c"/><path d="M31 2.800l.8.500L23 21.500" stroke="#f06a7a" stroke-width=".6" fill="none"/><path d="M20.200 20.700l2.400 1.300-2 4-2.200-1.200z" fill="#b8b8b8" stroke="#8a8a8a" stroke-width=".4"/><path d="M18.400 24.800l2.200 1.200-2.600 4.200z" fill="#e07a10"/></svg><span class="lb" style="margin-top:1px">处理相片</span></div>
<div class="btn" style="left:707px;top:121px"><svg viewBox="0 0 32 32" width="32" height="32" ><defs><linearGradient id="tl1" x1="0" y1="0" x2="1" y2="1"><stop offset="0" stop-color="#fff"/><stop offset="1" stop-color="#9a9aa0"/></linearGradient><linearGradient id="tl2" x1="0" y1="0" x2="1" y2="0"><stop offset="0" stop-color="#e8b460"/><stop offset="1" stop-color="#a8701a"/></linearGradient><linearGradient id="tl3" x1="0" y1="0" x2="1" y2="1"><stop offset="0" stop-color="#f4f8ff"/><stop offset=".45" stop-color="#b4d0f0"/><stop offset="1" stop-color="#4a7ac8"/></linearGradient></defs><path d="M12.500 9.500l3-2 11 22-3.500 1.800z" fill="url(#tl2)" stroke="#8a5a10" stroke-width=".5"/><path d="M.8 8.500c.5-2 2-3 4-3.500l6-3c3-1 6 0 8 2.500l-2 1.500c-1.500-1-3-1.300-4-.8l1.500 4-8 4c-2.500 1-5-1-5.500-4.700z" fill="url(#tl1)" stroke="#7a7a84" stroke-width=".8"/><ellipse cx="3.200" cy="9" rx="2" ry="3" fill="#f4f4f8" stroke="#9a9aa4" stroke-width=".5" transform="rotate(-20 3.200 9)"/><path d="M30.500 6.500c1 3-0 6-3 7.500-1.500.8-3 .8-4.500.3L11 26c.5 1.500.3 3-.8 4.300-1.500 1.700-3.500 2-5.700 1.200l3.300-3.500-1-2.500-2.800-.8L.8 28c-.8-2-.3-4.300 1.200-5.800 1.500-1.200 3-1.500 4.500-1L18.500 9.500c-.5-1.500-.5-3 .5-4.500 1.500-2 4-2.700 6.500-2l-3.500 3.700.8 2.800 2.800.8z" fill="url(#tl3)" stroke="#3a5aa8" stroke-width="1" stroke-linejoin="round"/></svg><span class="lb" style="margin-top:1px">相关工具</span></div>
<div class="btn" style="left:802px;top:121px"><svg viewBox="0 0 32 32" width="32" height="32" ><defs><linearGradient id="av1" x1="0" y1="0" x2="1" y2="1"><stop offset="0" stop-color="#8ac8ff"/><stop offset="1" stop-color="#1a4ab8"/></linearGradient><linearGradient id="av2" x1="0" y1="0" x2="1" y2="0"><stop offset="0" stop-color="#fff"/><stop offset="1" stop-color="#8a8a8a"/></linearGradient></defs><rect x="1" y="9" width="27" height="21.500" fill="#111"/><rect x="3" y="12" width="23" height="16.500" fill="url(#av1)"/><path d="M1 2.500L30 0v6.500L1 9.500z" fill="#111"/><path d="M3 3l3.500-.3-3 6-2.300.3zM9.500 2.300l3.500-.3-3 6.200-3.500.4zM24 1l3.500-.3-3 6-3.500.4z" fill="#fff"/><path d="M9 1.500c4-2 9-1 11 1l5 2c2.500 2 5 5 6 8v10l-5 4-2-6c-1-5-4-9-9-11z" fill="#6a5ad8" opacity=".75"/><path d="M12 3c3-1 6 0 8 1.500l1 5-7-2z" fill="#7ab8ff"/><path d="M24.500 8.500l4 6.500-2 5-4-9z" fill="#9ad0ff"/><path d="M1 14.500h3l6.500-4.500v17l-6.500-4.500h-3z" fill="url(#av2)" stroke="#6a6a6a" stroke-width=".5"/><rect x=".5" y="16" width="2.500" height="5" fill="#f2b010"/><path d="M10 13c0-2.500 2-4 4.500-3.500l-1 2.500 1.500 1.500 2.500-1c.3 2-.8 3.800-3 4l13 12c1 1.500-1 3.500-2.500 2.500L12.500 18.500C11 18 10 16 10 13z" fill="#fff" stroke="#e8101c" stroke-width="1.200"/><path d="M21 9.500l5.500-1.500 4 2.500-1 3-3-1.500-2 1.500L13 30.500l-3-1.500L22 13z" fill="#222" stroke="#e8101c" stroke-width="1.100"/></svg><span class="lb" style="margin-top:1px">音/视频工具</span></div>
<div class="btn" style="left:881px;top:121px"><svg viewBox="0 0 32 32" width="32" height="32" style="overflow:visible"><defs><linearGradient id="iv1" x1="0" y1="0" x2="0" y2="1"><stop offset="0" stop-color="#ffe060"/><stop offset="1" stop-color="#ff9a50"/></linearGradient><filter id="ivb" x="-20%" y="-20%" width="140%" height="140%"><feGaussianBlur stdDeviation=".7"/></filter></defs><g font-family="Liberation Sans,Noto Sans CJK SC,sans-serif" font-weight="700" font-size="13.600" text-anchor="middle"><g fill="#ff4a10" stroke="#ff4a10" stroke-width="2.400" stroke-linejoin="round" filter="url(#ivb)"><text x="16" y="14">插入</text><text x="16" y="28">视频</text></g><g fill="url(#iv1)" stroke="#ff8a20" stroke-width=".5"><text x="16" y="14">插入</text><text x="16" y="28">视频</text></g></g></svg><span class="lb" style="margin-top:1px">插入视频</span></div>
<div class="btn" style="left:959px;top:121px"><svg viewBox="0 0 32 32" width="32" height="32" style="overflow:visible"><rect x="16" y="3" width="14.500" height="24" rx="1.500" fill="#5aa050" opacity=".85"/><path d="M11 3.500c4-2 9-2 13 0v3H11z" fill="#7ab0f0" opacity=".85"/><g font-family="Liberation Sans,Noto Sans CJK SC,sans-serif" font-weight="900" font-size="13.600" text-anchor="middle" fill="#ffe61a" stroke="#f0141e" stroke-width="1.800" paint-order="stroke" stroke-linejoin="round"><text x="15.500" y="14">背景</text><text x="15.500" y="28">音乐</text></g></svg><span class="lb" style="margin-top:1px">背景音乐</span></div>
<div class="arr" style="left:81px;top:142px"></div>
<div class="arr" style="left:255px;top:142px"></div>
<div class="arr" style="left:752px;top:142px"></div>
<div class="vsep" style="left:270px;top:116px;height:55px"></div>
<div class="vsep" style="left:1002px;top:116px;height:55px"></div>
<div class="btn" style="left:36px;top:188px"><svg viewBox="0 0 32 32" width="32" height="32" style="overflow:visible"><ellipse cx="12" cy="25" rx="8" ry="1.300" fill="#000" opacity=".1"/><g transform="translate(16 2.600) rotate(45) scale(.8 .93)"><rect x="0" y="0" width="12.500" height="18.500" fill="#2a5cd8"/><rect x="-2.300" y="0" width="2.300" height="18.500" fill="#222"/><rect x="12.500" y="0" width="2.300" height="18.500" fill="#222"/><path d="M-1.700 1v16.500M13.700 1v16.500" stroke="#fff" stroke-width="1.100" stroke-dasharray="1.400 1.100"/><path d="M0 6.200h12.500M0 12.400h12.500" stroke="#173a9a" stroke-width=".9"/><rect x="1" y="1" width="10.500" height="4.500" fill="#4a82f0" opacity=".7"/></g><path d="M12.500 14.500c3 1.500 5 4.500 6.500 9l-2 .8c-2-2.500-4-5.500-4.500-9.800zM19.500 12.500c.8 3.500.5 7-1 11.500l-2-.8c.5-3.500 1.500-7 3-10.700z" fill="#cfe6fa" stroke="#7fb4e0" stroke-width=".6"/><ellipse cx="19.500" cy="27" rx="2" ry="2.600" fill="none" stroke="#f04a10" stroke-width="1.700" transform="rotate(30 19.500 27)"/><ellipse cx="24.500" cy="24" rx="2" ry="2.600" fill="none" stroke="#f04a10" stroke-width="1.700" transform="rotate(60 24.500 24)"/></svg><span class="lb" style="margin-top:1px">视频截取</span></div>
<div class="btn" style="left:115px;top:188px"><svg viewBox="0 0 32 32" width="32" height="32" ><defs><linearGradient id="g28" x1="0" y1="0" x2="0" y2="1"><stop offset="0" stop-color="#0f4fb8"/><stop offset="1" stop-color="#8ad0ff"/></linearGradient></defs><g transform="translate(0.5 5)"><rect x="0" y="0" width="10.500" height="10.500" fill="#f8f8f8"/><rect x=".6" y="3.200" width="9.300" height="6.700" fill="url(#g28)" stroke="#0a2a6a" stroke-width=".5"/><path d="M.3 2.800L10.200.8v-1L.3 1z" fill="#222"/><rect x=".3" y="1.500" width="9.900" height="1.700" fill="#222"/><path d="M2 1.500l1 1.700M4.500 1.500l1 1.700M7 1.500l1 1.700" stroke="#ddd" stroke-width=".7"/></g><defs><linearGradient id="g29" x1="0" y1="0" x2="0" y2="1"><stop offset="0" stop-color="#0f4fb8"/><stop offset="1" stop-color="#8ad0ff"/></linearGradient></defs><g transform="translate(20.5 5)"><rect x="0" y="0" width="10.500" height="10.500" fill="#f8f8f8"/><rect x=".6" y="3.200" width="9.300" height="6.700" fill="url(#g29)" stroke="#0a2a6a" stroke-width=".5"/><path d="M.3 2.800L10.200.8v-1L.3 1z" fill="#222"/><rect x=".3" y="1.500" width="9.900" height="1.700" fill="#222"/><path d="M2 1.500l1 1.700M4.500 1.500l1 1.700M7 1.500l1 1.700" stroke="#ddd" stroke-width=".7"/></g><path d="M12 10.500h7.500" stroke="#b0b0b0" stroke-width="1.600"/><g fill="none" stroke-linejoin="round"><rect x="2" y="19" width="13" height="7.500" rx="1.500" stroke="#ff3a10" stroke-width="4"/><rect x="16.500" y="19" width="13" height="7.500" rx="1.500" stroke="#ff3a10" stroke-width="4"/><rect x="2" y="19" width="13" height="7.500" rx="1.500" stroke="#ffee00" stroke-width="2.200"/><rect x="16.500" y="19" width="13" height="7.500" rx="1.500" stroke="#ffee00" stroke-width="2.200"/></g><rect x="4" y="21" width="9" height="3.500" fill="#f4f4f4"/><rect x="18.500" y="21" width="9" height="3.500" fill="#f4f4f4"/><rect x="9" y="21.200" width="13" height="3.200" rx="1.500" fill="#ff1a10"/><rect x="10" y="22" width="11" height="1.600" fill="#ffee00"/></svg><span class="lb" style="margin-top:1px">合并视频</span></div>
<div class="btn" style="left:194px;top:188px"><svg viewBox="0 0 32 32" width="32" height="32" style="overflow:visible"><g stroke="#2a08c8" fill="none" stroke-linecap="round"><path d="M5.500 6.500c3-1.800 9-2.200 13-1" stroke-width="3.400"/><path d="M8.500 6.500v17" stroke-width="4.200"/><path d="M3 26h15" stroke-width="1.800"/></g><circle cx="3.300" cy="26" r="1.700" fill="#1a0098"/><circle cx="17.500" cy="26" r="1.700" fill="#1a0098"/><circle cx="8.500" cy="21" r="2.400" fill="#3a18e0"/><g transform="translate(14 6) rotate(10)"><rect x="-.8" y="-.8" width="18.600" height="16.600" fill="#a090d8" opacity=".55"/><rect x="0" y="0" width="17" height="15" fill="#0c0c0c"/><rect x=".8" y="3.300" width="15.400" height="8.400" fill="#8884a8"/><path d="M.8 11.700V8l1.500-2 1.500 2.500 1.500-3 1.500 3 1.500-2 1.500 2.500 1.500-3 1.500 3 1.500-2.500 1.400 2v3.200z" fill="#101014"/><path d="M1 4h15v2.500H1z" fill="#c8c4e0" opacity=".6"/><rect x="0.61" y="1.100" width="1.21" height="1.700" rx=".4" fill="#fff"/><rect x="0.61" y="12.20" width="1.21" height="1.700" rx=".4" fill="#fff"/><rect x="3.04" y="1.100" width="1.21" height="1.700" rx=".4" fill="#fff"/><rect x="3.04" y="12.20" width="1.21" height="1.700" rx=".4" fill="#fff"/><rect x="5.46" y="1.100" width="1.21" height="1.700" rx=".4" fill="#fff"/><rect x="5.46" y="12.20" width="1.21" height="1.700" rx=".4" fill="#fff"/><rect x="7.89" y="1.100" width="1.21" height="1.700" rx=".4" fill="#fff"/><rect x="7.89" y="12.20" width="1.21" height="1.700" rx=".4" fill="#fff"/><rect x="10.32" y="1.100" width="1.21" height="1.700" rx=".4" fill="#fff"/><rect x="10.32" y="12.20" width="1.21" height="1.700" rx=".4" fill="#fff"/><rect x="12.75" y="1.100" width="1.21" height="1.700" rx=".4" fill="#fff"/><rect x="12.75" y="12.20" width="1.21" height="1.700" rx=".4" fill="#fff"/><rect x="15.18" y="1.100" width="1.21" height="1.700" rx=".4" fill="#fff"/><rect x="15.18" y="12.20" width="1.21" height="1.700" rx=".4" fill="#fff"/></g></svg><span class="lb" style="margin-top:1px">压缩视频</span></div>
<div class="btn" style="left:272px;top:188px"><svg viewBox="0 0 32 32" width="32" height="32" style="overflow:visible"><g font-family="Liberation Serif,Noto Serif CJK SC,serif" font-weight="900" font-size="13" text-anchor="middle" fill="#ffc400" stroke="#f0201a" stroke-width="1.500" paint-order="stroke" stroke-linejoin="round"><text x="16.500" y="13">去除</text><text x="15.500" y="28.500">人声</text></g></svg><span class="lb" style="margin-top:1px">去除人声</span></div>
<div class="btn" style="left:351px;top:188px"><svg viewBox="0 0 32 32" width="32" height="32" style="overflow:visible"><g text-anchor="middle" fill="#fff" stroke="#f0201a" paint-order="stroke" stroke-linejoin="round"><text x="15" y="13.500" font-family="Liberation Serif,Noto Serif CJK SC,serif" font-weight="900" font-size="12" stroke-width="1.600">卡拉</text><text x="14" y="28.800" font-family="Liberation Sans,sans-serif" font-weight="bold" font-size="15.500" stroke-width="2">OK</text></g></svg><span class="lb" style="margin-top:1px">双音轨视频</span></div>
<div class="btn" style="left:437px;top:188px"><svg viewBox="0 0 32 32" width="32" height="32" ><defs><radialGradient id="up1" cx=".45" cy=".75" r=".7"><stop offset="0" stop-color="#e8f4ff"/><stop offset=".35" stop-color="#4a90f0"/><stop offset="1" stop-color="#0a32c8"/></radialGradient><linearGradient id="up2" x1="0" y1="0" x2="0" y2="1"><stop offset="0" stop-color="#ffc800"/><stop offset=".4" stop-color="#ff8a10"/><stop offset=".75" stop-color="#ffd0a0"/><stop offset="1" stop-color="#ffe0c0" stop-opacity=".6"/></linearGradient></defs><circle cx="16" cy="21" r="10.800" fill="url(#up1)"/><ellipse cx="16" cy="27" rx="6.500" ry="3.500" fill="#fff" opacity=".55"/><path d="M16 .5L27.500 11h-5v9c0 2-1 2-1.500 0-.5-3-1.500-3-2 0l-.5 5c-.3 1-1 1-1.200 0l-.5-4c-.4-2-1.300-2-1.600 0l-.4 2c-.3 1-1 1-1.200 0l-.6-3c-.5-2-1.300-2-1.500 0-.3 2-1.500 2-1.500 0v-9h-5z" fill="url(#up2)"/></svg><span class="lb" style="margin-top:1px">在线升级</span></div>
<div class="btn" style="left:516px;top:188px"><svg viewBox="0 0 32 32" width="32" height="32" style="overflow:visible"><defs><linearGradient id="rg1" x1="0" y1="0" x2="1" y2="1"><stop offset="0" stop-color="#fff"/><stop offset="1" stop-color="#8a8a90"/></linearGradient><linearGradient id="rg2" x1="0" y1="0" x2="1" y2="1"><stop offset="0" stop-color="#7ae050"/><stop offset="1" stop-color="#1e9a1e"/></linearGradient></defs><path d="M16.500.8c3.500 2.200 7.500 3.200 11 3.200.5 10-2 21-11 27.200C7.500 25 5 14 5.500 4c3.500 0 7.500-1 11-3.200z" fill="url(#rg1)" stroke="#8a8a90" stroke-width=".7"/><path d="M16.500 3c-3 1.800-6 2.700-9 2.800-.2 3.500.2 7 1 10.200h8z" fill="#3a86d8"/><path d="M16.500 3c3 1.800 6 2.700 9 2.800.2 3.500-.2 7-1 10.200h-8z" fill="#ffd84a"/><path d="M8.500 16h8v13c-4-3-6.800-7.500-8-13z" fill="#ffcf3a"/><path d="M24.500 16h-8v13c4-3 6.800-7.500 8-13z" fill="#2f7fd0"/><path d="M7 5l7 7.500-3.500.5c-1.500 4 0 9 4.500 12.500-7-1.500-10.500-7-9-12.500l-4 .5z" fill="url(#rg2)" stroke="#1a8a1a" stroke-width=".5"/><path d="M26 27l-7-7.500 3.500-.5c1.500-4 0-9-4.500-12.500 7 1.500 10.500 7 9 12.500l4-.5z" fill="url(#rg2)" stroke="#1a8a1a" stroke-width=".5"/></svg><span class="lb" style="margin-top:1px">管理权限</span></div>
<div class="btn" style="left:595px;top:188px"><svg viewBox="0 0 32 32" width="32" height="32" ><path d="M3 8l27 1.500-1 20.500L2.500 27z" fill="#fafafa" stroke="#cfcfcf" stroke-width=".6"/><path d="M1.500 5.500h28.500v22h-28.500z" fill="#fff" stroke="#d0d0d0" stroke-width=".7"/><rect x="3.500" y="7.500" width="24.500" height="17.500" fill="#101010"/><rect x="3.500" y="7.500" width="2.800" height="17.500" fill="#7ad0d8"/><rect x="25.200" y="7.500" width="2.800" height="17.500" fill="#7ad0d8"/><path d="M4.900 8.500v16M26.600 8.500v16" stroke="#fff" stroke-width="1.400" stroke-dasharray="1.600 1.500"/><rect x="7.500" y="9" width="16.500" height="14.500" fill="#1e9ae8"/><path d="M7.500 14l3-1 2 1.500 1.500-2 2 2.500v5h-8.500z" fill="#e82a1a"/><path d="M9 15.500l2.500-.5 1 4h-3.500z" fill="#3a2ad0"/><path d="M12 14l2 0 .5 5h-2z" fill="#f2c01a"/><circle cx="20" cy="14.500" r="3.800" fill="#181010"/><path d="M17.500 14.500a2.500 3 0 0 1 5 0l-1 2.500h-3z" fill="#f2d21a"/><path d="M18 16.500h4l-1 2.500-2 0z" fill="#e81a1a"/><path d="M17.500 20l2.500 3.500 2.500-3.500z" fill="#181010"/><path d="M13.500 21l1.500 1.500M16 22.500l.5 1" stroke="#e82a5a" stroke-width="1.200"/></svg><span class="lb" style="margin-top:1px">我的相册</span></div>
<div class="btn" style="left:673px;top:188px"><svg viewBox="0 0 32 32" width="32" height="32" style="overflow:visible"><path d="M1 13l18-7 9 22-18 5z" fill="#f2dc8a"/><path d="M2.500 6.500L24 1.500l7 24-20 6z" fill="#fdfcf4" stroke="#e8dcb8" stroke-width=".7"/><defs><linearGradient id="rgp" x1="0" y1="0" x2="1" y2="1"><stop offset="0" stop-color="#fff"/><stop offset="1" stop-color="#e4daf8"/></linearGradient></defs><path d="M4 10.500L25 5.500l5.500 19.500-19 5.500z" fill="url(#rgp)"/><path d="M2.800 6.800L24 1.800l1.500 5L4.500 12z" fill="#3a94f0"/><text transform="translate(6 10.300) rotate(-13.500)" font-family="Liberation Sans,Noto Sans CJK SC,sans-serif" font-size="4.600" font-weight="bold" fill="#d8ecff">用户注册</text><path d="M6.500 14.500l17-4.300M7.300 17l17-4.300M8 19.500l17-4.300M8.800 22l17-4.300M9.500 24.500l17-4.300M10.300 27l12-3" stroke="#9a9a9a" stroke-width=".7" stroke-dasharray="1.500 .8" fill="none"/><path d="M29.500 4.500l2 1L18 29l-2.500 2.500.6-3.600z" fill="#222"/><path d="M30 5.500L17.500 28" stroke="#777" stroke-width=".6"/></svg><span class="lb" style="margin-top:1px">用户注册</span></div>
<div class="btn" style="left:752px;top:188px"><svg viewBox="0 0 32 32" width="32" height="32" style="overflow:visible"><defs><linearGradient id="fb1" x1="0" y1="0" x2="1" y2="1"><stop offset="0" stop-color="#f0488c"/><stop offset=".5" stop-color="#d81060"/><stop offset="1" stop-color="#a80848"/></linearGradient><radialGradient id="fb2" cx=".4" cy=".3" r=".8"><stop offset="0" stop-color="#ffd840"/><stop offset=".6" stop-color="#f0ac00"/><stop offset="1" stop-color="#a87800"/></radialGradient></defs><ellipse cx="17" cy="29" rx="12" ry="1.500" fill="#8a7a5a" opacity=".25"/><path d="M7.500 4c6-1.500 13-2 19-1.500 1.500.2 2 1 2 2.500v14c0 1.500-1 2.500-2.500 2.500H13.500c-1.500 3-4.500 5.500-8.500 6.500 2-2 3-4.500 3-7-2-.2-3-1.500-3-3.200v-10c0-2 .8-3.300 2.500-3.800z" fill="url(#fb1)"/><path d="M8 5c5-1.200 12-1.800 18.500-1.200v5c-6-.5-13 0-19 1.700z" fill="#ff9ac0" opacity=".55"/><path d="M22.500 8.500c5 0 9 3.500 9 8.200 0 3.500-2 6.300-5 7.500.5 2 1.800 3.500 3.500 4.500-3 0-5.500-1.300-7-3.600h-.5c-5 0-9-3.700-9-8.400s4-8.200 9-8.200z" fill="url(#fb2)"/><circle cx="19" cy="18.500" r=".9" fill="#a87800"/><circle cx="22.500" cy="18.500" r=".9" fill="#a87800"/><circle cx="26" cy="18.500" r=".9" fill="#a87800"/></svg><span class="lb" style="margin-top:1px">咨询反馈</span></div>
<div class="btn" style="left:821px;top:188px"><svg viewBox="0 0 32 32" width="32" height="32" style="overflow:visible"><g fill="#000"><rect x="6" y="3" width="7" height="4"/><rect x="2" y="6.500" width="15" height="9"/></g><path d="M3 8.700h13M3 11h13M3 13.300h13" stroke="#fff" stroke-width="1.100" stroke-dasharray="3.500 1"/><path d="M7 4.800h5" stroke="#fff" stroke-width="1"/><path d="M19.500 6c3-2.500 7.500-1.500 10 1.500 1.500 3 .8 6-2.500 8-2.500 1.500-3.500 4-3 7.500l.3 3.500" stroke="#0a0a0a" stroke-width="5.600" fill="none"/><path d="M19.500 6c3-2.500 7.500-1.500 10 1.500 1.500 3 .8 6-2.500 8-2.500 1.500-3.500 4-3 7.500l.3 3.500" stroke="#18d8e0" stroke-width="3" fill="none" stroke-dasharray="2.600 1.200"/><g transform="rotate(-8 13 20)"><rect x="5.500" y="14.500" width="16.500" height="12.500" fill="#f4f4f0" stroke="#c8d8b0" stroke-width=".5"/><rect x="6.800" y="15.800" width="14" height="9.500" fill="#bfe2f8"/><path d="M6.800 21l2.500-2.500 2 1.500 2.500-3 2.500 2.500 2-1.500 2.500 2v3.300h-14z" fill="#3a9a3a"/><path d="M6.800 22.500h14v2.800h-14z" fill="#f0c020"/><path d="M6.800 21.500l3-1 3 1.500 3-1 3 1 2-.5v1.500h-14z" fill="#d040c0"/></g></svg><span class="lb" style="margin-top:1px">相册示例</span></div>
<div class="vsep" style="left:393px;top:183px;height:55px"></div>
<div class="abs" style="left:0;top:242px;width:280px;height:534px;background:#f0f0f0"></div>
<div class="abs hdr" style="top:244px">选定相片信息</div>
<div class="lab" style="left:5px;top:279px">相片名称:</div>
<div class="lab blue" style="left:63px;top:281px">微信图片_20221024114108</div>
<div class="redl" style="top:299px"></div>
<div class="lab link" style="left:251px;top:282px">里</div>
<div class="lab" style="left:5px;top:309px">拍摄人名:</div>
<div class="redl" style="top:328px"></div>
<div class="lab link" style="left:251px;top:311px">里</div>
<div class="lab" style="left:5px;top:339px">拍摄时间:</div>
<div class="lab blue" style="left:63px;top:342px">2023-9-8 17:50:16</div>
<div class="redl" style="top:361px"></div>
<div class="lab link" style="left:251px;top:343px">里</div>
<div class="lab" style="left:5px;top:370px">声音描述:</div>
<div class="lab" style="left:105px;top:375px;color:#0000ff">无</div>
<div class="lab" style="left:198px;top:374px">设置声音</div>
<div class="lab" style="left:5px;top:400px">文字描述:</div>
<div class="lab link" style="left:69px;top:401px">里</div>
<div class="abs" style="left:7px;top:423px;width:264px;height:97px;border:1px solid #8a8a8a;background:#fff"></div>
<div class="abs" style="left:253px;top:424px;width:17px;height:95px;background:#f0f0f0"></div>
<svg class="abs" style="left:253px;top:424px" width="17" height="95" viewBox="0 0 17 95"><g stroke="#bcbcbc" stroke-width="1.800" fill="none"><path d="M4.500 11.500l3.500-3.500 3.500 3.500"/><path d="M4.500 84l3.500 3.500 3.500-3.500"/></g></svg>
<div class="abs hdr" style="top:536px;height:25px;line-height:24px">重要信息提示</div>
<div class="abs" style="left:8px;top:570px;width:80px;height:80px"><svg viewBox="0 0 80 80" width="80" height="80"><rect width="80" height="80" fill="#fff"/><path d="M0.00 0.00h13.66v1.95h-13.66zM19.51 0.00h5.85v1.95h-5.85zM29.27 0.00h1.95v1.95h-1.95zM39.02 0.00h3.90v1.95h-3.90zM44.88 0.00h11.71v1.95h-11.71zM62.44 0.00h1.95v1.95h-1.95zM66.34 0.00h13.66v1.95h-13.66zM0.00 1.95h1.95v1.95h-1.95zM11.71 1.95h1.95v1.95h-1.95zM17.56 1.95h3.90v1.95h-3.90zM23.41 1.95h1.95v1.95h-1.95zM27.32 1.95h3.90v1.95h-3.90zM35.12 1.95h5.85v1.95h-5.85zM44.88 1.95h7.80v1.95h-7.80zM54.63 1.95h1.95v1.95h-1.95zM58.54 1.95h3.90v1.95h-3.90zM66.34 1.95h1.95v1.95h-1.95zM78.05 1.95h1.95v1.95h-1.95zM0.00 3.90h1.95v1.95h-1.95zM3.90 3.90h5.85v1.95h-5.85zM11.71 3.90h1.95v1.95h-1.95zM15.61 3.90h3.90v1.95h-3.90zM21.46 3.90h7.80v1.95h-7.80zM31.22 3.90h1.95v1.95h-1.95zM35.12 3.90h3.90v1.95h-3.90zM40.98 3.90h1.95v1.95h-1.95zM46.83 3.90h3.90v1.95h-3.90zM54.63 3.90h3.90v1.95h-3.90zM62.44 3.90h1.95v1.95h-1.95zM66.34 3.90h1.95v1.95h-1.95zM70.24 3.90h5.85v1.95h-5.85zM78.05 3.90h1.95v1.95h-1.95zM0.00 5.85h1.95v1.95h-1.95zM3.90 5.85h5.85v1.95h-5.85zM11.71 5.85h1.95v1.95h-1.95zM15.61 5.85h1.95v1.95h-1.95zM23.41 5.85h1.95v1.95h-1.95zM27.32 5.85h13.66v1.95h-13.66zM42.93 5.85h3.90v1.95h-3.90zM56.59 5.85h5.85v1.95h-5.85zM66.34 5.85h1.95v1.95h-1.95zM70.24 5.85h5.85v1.95h-5.85zM78.05 5.85h1.95v1.95h-1.95zM0.00 7.80h1.95v1.95h-1.95zM3.90 7.80h5.85v1.95h-5.85zM11.71 7.80h1.95v1.95h-1.95zM15.61 7.80h1.95v1.95h-1.95zM23.41 7.80h1.95v1.95h-1.95zM33.17 7.80h1.95v1.95h-1.95zM39.02 7.80h1.95v1.95h-1.95zM48.78 7.80h1.95v1.95h-1.95zM54.63 7.80h1.95v1.95h-1.95zM58.54 7.80h1.95v1.95h-1.95zM62.44 7.80h1.95v1.95h-1.95zM66.34 7.80h1.95v1.95h-1.95zM70.24 7.80h5.85v1.95h-5.85zM78.05 7.80h1.95v1.95h-1.95zM0.00 9.76h1.95v1.95h-1.95zM11.71 9.76h1.95v1.95h-1.95zM17.56 9.76h1.95v1.95h-1.95zM21.46 9.76h3.90v1.95h-3.90zM31.22 9.76h1.95v1.95h-1.95zM35.12 9.76h5.85v1.95h-5.85zM48.78 9.76h11.71v1.95h-11.71zM62.44 9.76h1.95v1.95h-1.95zM66.34 9.76h1.95v1.95h-1.95zM78.05 9.76h1.95v1.95h-1.95zM0.00 11.71h13.66v1.95h-13.66zM15.61 11.71h1.95v1.95h-1.95zM19.51 11.71h1.95v1.95h-1.95zM23.41 11.71h1.95v1.95h-1.95zM27.32 11.71h1.95v1.95h-1.95zM31.22 11.71h1.95v1.95h-1.95zM35.12 11.71h1.95v1.95h-1.95zM39.02 11.71h1.95v1.95h-1.95zM42.93 11.71h1.95v1.95h-1.95zM46.83 11.71h1.95v1.95h-1.95zM50.73 11.71h1.95v1.95h-1.95zM54.63 11.71h1.95v1.95h-1.95zM58.54 11.71h1.95v1.95h-1.95zM62.44 11.71h1.95v1.95h-1.95zM66.34 11.71h13.66v1.95h-13.66zM15.61 13.66h1.95v1.95h-1.95zM25.37 13.66h1.95v1.95h-1.95zM37.07 13.66h1.95v1.95h-1.95zM42.93 13.66h5.85v1.95h-5.85zM52.68 13.66h3.90v1.95h-3.90zM58.54 13.66h1.95v1.95h-1.95zM62.44 13.66h1.95v1.95h-1.95zM1.95 15.61h1.95v1.95h-1.95zM5.85 15.61h3.90v1.95h-3.90zM11.71 15.61h1.95v1.95h-1.95zM23.41 15.61h3.90v1.95h-3.90zM31.22 15.61h1.95v1.95h-1.95zM40.98 15.61h1.95v1.95h-1.95zM48.78 15.61h1.95v1.95h-1.95zM54.63 15.61h1.95v1.95h-1.95zM60.49 15.61h1.95v1.95h-1.95zM64.39 15.61h1.95v1.95h-1.95zM68.29 15.61h1.95v1.95h-1.95zM74.15 15.61h5.85v1.95h-5.85zM0.00 17.56h1.95v1.95h-1.95zM5.85 17.56h5.85v1.95h-5.85zM15.61 17.56h1.95v1.95h-1.95zM19.51 17.56h5.85v1.95h-5.85zM27.32 17.56h3.90v1.95h-3.90zM33.17 17.56h1.95v1.95h-1.95zM37.07 17.56h1.95v1.95h-1.95zM40.98 17.56h3.90v1.95h-3.90zM46.83 17.56h5.85v1.95h-5.85zM54.63 17.56h3.90v1.95h-3.90zM70.24 17.56h1.95v1.95h-1.95zM78.05 17.56h1.95v1.95h-1.95zM0.00 19.51h1.95v1.95h-1.95zM3.90 19.51h1.95v1.95h-1.95zM9.76 19.51h3.90v1.95h-3.90zM15.61 19.51h3.90v1.95h-3.90zM21.46 19.51h1.95v1.95h-1.95zM25.37 19.51h3.90v1.95h-3.90zM31.22 19.51h3.90v1.95h-3.90zM40.98 19.51h1.95v1.95h-1.95zM50.73 19.51h7.80v1.95h-7.80zM64.39 19.51h5.85v1.95h-5.85zM76.10 19.51h3.90v1.95h-3.90zM1.95 21.46h1.95v1.95h-1.95zM5.85 21.46h3.90v1.95h-3.90zM15.61 21.46h1.95v1.95h-1.95zM21.46 21.46h3.90v1.95h-3.90zM27.32 21.46h5.85v1.95h-5.85zM35.12 21.46h1.95v1.95h-1.95zM46.83 21.46h1.95v1.95h-1.95zM56.59 21.46h1.95v1.95h-1.95zM66.34 21.46h1.95v1.95h-1.95zM78.05 21.46h1.95v1.95h-1.95zM1.95 23.41h11.71v1.95h-11.71zM15.61 23.41h1.95v1.95h-1.95zM21.46 23.41h1.95v1.95h-1.95zM29.27 23.41h1.95v1.95h-1.95zM40.98 23.41h1.95v1.95h-1.95zM46.83 23.41h13.66v1.95h-13.66zM76.10 23.41h1.95v1.95h-1.95zM1.95 25.37h1.95v1.95h-1.95zM5.85 25.37h5.85v1.95h-5.85zM15.61 25.37h1.95v1.95h-1.95zM19.51 25.37h1.95v1.95h-1.95zM25.37 25.37h3.90v1.95h-3.90zM33.17 25.37h1.95v1.95h-1.95zM37.07 25.37h9.76v1.95h-9.76zM48.78 25.37h1.95v1.95h-1.95zM54.63 25.37h1.95v1.95h-1.95zM60.49 25.37h1.95v1.95h-1.95zM64.39 25.37h3.90v1.95h-3.90zM70.24 25.37h1.95v1.95h-1.95zM78.05 25.37h1.95v1.95h-1.95zM5.85 27.32h1.95v1.95h-1.95zM9.76 27.32h5.85v1.95h-5.85zM17.56 27.32h3.90v1.95h-3.90zM23.41 27.32h3.90v1.95h-3.90zM29.27 27.32h1.95v1.95h-1.95zM40.98 27.32h3.90v1.95h-3.90zM50.73 27.32h3.90v1.95h-3.90zM64.39 27.32h3.90v1.95h-3.90zM74.15 27.32h5.85v1.95h-5.85zM0.00 29.27h1.95v1.95h-1.95zM3.90 29.27h1.95v1.95h-1.95zM7.80 29.27h3.90v1.95h-3.90zM17.56 29.27h7.80v1.95h-7.80zM29.27 29.27h3.90v1.95h-3.90zM39.02 29.27h5.85v1.95h-5.85zM46.83 29.27h1.95v1.95h-1.95zM52.68 29.27h1.95v1.95h-1.95zM60.49 29.27h5.85v1.95h-5.85zM68.29 29.27h3.90v1.95h-3.90zM74.15 29.27h1.95v1.95h-1.95zM78.05 29.27h1.95v1.95h-1.95zM1.95 31.22h3.90v1.95h-3.90zM7.80 31.22h5.85v1.95h-5.85zM15.61 31.22h5.85v1.95h-5.85zM23.41 31.22h3.90v1.95h-3.90zM37.07 31.22h1.95v1.95h-1.95zM40.98 31.22h5.85v1.95h-5.85zM50.73 31.22h13.66v1.95h-13.66zM74.15 31.22h1.95v1.95h-1.95zM0.00 33.17h3.90v1.95h-3.90zM15.61 33.17h1.95v1.95h-1.95zM21.46 33.17h3.90v1.95h-3.90zM29.27 33.17h1.95v1.95h-1.95zM33.17 33.17h1.95v1.95h-1.95zM39.02 33.17h3.90v1.95h-3.90zM48.78 33.17h3.90v1.95h-3.90zM56.59 33.17h1.95v1.95h-1.95zM66.34 33.17h1.95v1.95h-1.95zM9.76 35.12h5.85v1.95h-5.85zM19.51 35.12h9.76v1.95h-9.76zM31.22 35.12h5.85v1.95h-5.85zM40.98 35.12h5.85v1.95h-5.85zM50.73 35.12h9.76v1.95h-9.76zM64.39 35.12h7.80v1.95h-7.80zM74.15 35.12h1.95v1.95h-1.95zM0.00 37.07h3.90v1.95h-3.90zM7.80 37.07h1.95v1.95h-1.95zM13.66 37.07h5.85v1.95h-5.85zM23.41 37.07h1.95v1.95h-1.95zM29.27 37.07h1.95v1.95h-1.95zM35.12 37.07h7.80v1.95h-7.80zM48.78 37.07h7.80v1.95h-7.80zM64.39 37.07h1.95v1.95h-1.95zM68.29 37.07h1.95v1.95h-1.95zM72.20 37.07h1.95v1.95h-1.95zM0.00 39.02h3.90v1.95h-3.90zM5.85 39.02h7.80v1.95h-7.80zM17.56 39.02h1.95v1.95h-1.95zM21.46 39.02h1.95v1.95h-1.95zM25.37 39.02h1.95v1.95h-1.95zM29.27 39.02h1.95v1.95h-1.95zM35.12 39.02h1.95v1.95h-1.95zM39.02 39.02h9.76v1.95h-9.76zM50.73 39.02h1.95v1.95h-1.95zM54.63 39.02h5.85v1.95h-5.85zM66.34 39.02h3.90v1.95h-3.90zM72.20 39.02h1.95v1.95h-1.95zM76.10 39.02h3.90v1.95h-3.90zM3.90 40.98h1.95v1.95h-1.95zM7.80 40.98h3.90v1.95h-3.90zM13.66 40.98h5.85v1.95h-5.85zM21.46 40.98h3.90v1.95h-3.90zM27.32 40.98h1.95v1.95h-1.95zM35.12 40.98h1.95v1.95h-1.95zM39.02 40.98h5.85v1.95h-5.85zM48.78 40.98h3.90v1.95h-3.90zM56.59 40.98h11.71v1.95h-11.71zM70.24 40.98h1.95v1.95h-1.95zM0.00 42.93h9.76v1.95h-9.76zM11.71 42.93h1.95v1.95h-1.95zM19.51 42.93h5.85v1.95h-5.85zM27.32 42.93h3.90v1.95h-3.90zM39.02 42.93h1.95v1.95h-1.95zM46.83 42.93h1.95v1.95h-1.95zM50.73 42.93h1.95v1.95h-1.95zM62.44 42.93h1.95v1.95h-1.95zM68.29 42.93h5.85v1.95h-5.85zM78.05 42.93h1.95v1.95h-1.95zM1.95 44.88h5.85v1.95h-5.85zM9.76 44.88h1.95v1.95h-1.95zM19.51 44.88h1.95v1.95h-1.95zM29.27 44.88h1.95v1.95h-1.95zM33.17 44.88h1.95v1.95h-1.95zM37.07 44.88h1.95v1.95h-1.95zM42.93 44.88h1.95v1.95h-1.95zM46.83 44.88h5.85v1.95h-5.85zM58.54 44.88h1.95v1.95h-1.95zM64.39 44.88h1.95v1.95h-1.95zM70.24 44.88h9.76v1.95h-9.76zM1.95 46.83h1.95v1.95h-1.95zM5.85 46.83h1.95v1.95h-1.95zM9.76 46.83h5.85v1.95h-5.85zM17.56 46.83h1.95v1.95h-1.95zM23.41 46.83h3.90v1.95h-3.90zM35.12 46.83h1.95v1.95h-1.95zM42.93 46.83h3.90v1.95h-3.90zM54.63 46.83h1.95v1.95h-1.95zM58.54 46.83h3.90v1.95h-3.90zM72.20 46.83h1.95v1.95h-1.95zM76.10 46.83h3.90v1.95h-3.90zM0.00 48.78h1.95v1.95h-1.95zM3.90 48.78h3.90v1.95h-3.90zM13.66 48.78h7.80v1.95h-7.80zM29.27 48.78h1.95v1.95h-1.95zM33.17 48.78h1.95v1.95h-1.95zM40.98 48.78h1.95v1.95h-1.95zM44.88 48.78h1.95v1.95h-1.95zM50.73 48.78h9.76v1.95h-9.76zM64.39 48.78h3.90v1.95h-3.90zM70.24 48.78h3.90v1.95h-3.90zM76.10 48.78h3.90v1.95h-3.90zM3.90 50.73h5.85v1.95h-5.85zM11.71 50.73h3.90v1.95h-3.90zM17.56 50.73h5.85v1.95h-5.85zM27.32 50.73h1.95v1.95h-1.95zM31.22 50.73h1.95v1.95h-1.95zM35.12 50.73h3.90v1.95h-3.90zM40.98 50.73h1.95v1.95h-1.95zM48.78 50.73h1.95v1.95h-1.95zM54.63 50.73h7.80v1.95h-7.80zM64.39 50.73h5.85v1.95h-5.85zM74.15 50.73h1.95v1.95h-1.95zM1.95 52.68h3.90v1.95h-3.90zM9.76 52.68h1.95v1.95h-1.95zM13.66 52.68h1.95v1.95h-1.95zM17.56 52.68h1.95v1.95h-1.95zM23.41 52.68h1.95v1.95h-1.95zM27.32 52.68h3.90v1.95h-3.90zM33.17 52.68h3.90v1.95h-3.90zM39.02 52.68h3.90v1.95h-3.90zM44.88 52.68h1.95v1.95h-1.95zM50.73 52.68h3.90v1.95h-3.90zM56.59 52.68h1.95v1.95h-1.95zM60.49 52.68h3.90v1.95h-3.90zM68.29 52.68h1.95v1.95h-1.95zM5.85 54.63h1.95v1.95h-1.95zM9.76 54.63h7.80v1.95h-7.80zM23.41 54.63h5.85v1.95h-5.85zM31.22 54.63h3.90v1.95h-3.90zM42.93 54.63h13.66v1.95h-13.66zM58.54 54.63h1.95v1.95h-1.95zM68.29 54.63h9.76v1.95h-9.76zM1.95 56.59h1.95v1.95h-1.95zM5.85 56.59h1.95v1.95h-1.95zM9.76 56.59h1.95v1.95h-1.95zM13.66 56.59h1.95v1.95h-1.95zM21.46 56.59h7.80v1.95h-7.80zM31.22 56.59h3.90v1.95h-3.90zM39.02 56.59h3.90v1.95h-3.90zM44.88 56.59h3.90v1.95h-3.90zM50.73 56.59h11.71v1.95h-11.71zM68.29 56.59h3.90v1.95h-3.90zM74.15 56.59h3.90v1.95h-3.90zM0.00 58.54h3.90v1.95h-3.90zM7.80 58.54h9.76v1.95h-9.76zM25.37 58.54h3.90v1.95h-3.90zM31.22 58.54h1.95v1.95h-1.95zM35.12 58.54h5.85v1.95h-5.85zM42.93 58.54h11.71v1.95h-11.71zM60.49 58.54h5.85v1.95h-5.85zM68.29 58.54h11.71v1.95h-11.71zM3.90 60.49h5.85v1.95h-5.85zM19.51 60.49h7.80v1.95h-7.80zM29.27 60.49h1.95v1.95h-1.95zM35.12 60.49h9.76v1.95h-9.76zM46.83 60.49h5.85v1.95h-5.85zM54.63 60.49h1.95v1.95h-1.95zM58.54 60.49h1.95v1.95h-1.95zM64.39 60.49h5.85v1.95h-5.85zM72.20 60.49h3.90v1.95h-3.90zM78.05 60.49h1.95v1.95h-1.95zM0.00 62.44h9.76v1.95h-9.76zM11.71 62.44h1.95v1.95h-1.95zM17.56 62.44h1.95v1.95h-1.95zM23.41 62.44h1.95v1.95h-1.95zM33.17 62.44h1.95v1.95h-1.95zM37.07 62.44h23.41v1.95h-23.41zM62.44 62.44h9.76v1.95h-9.76zM15.61 64.39h9.76v1.95h-9.76zM29.27 64.39h1.95v1.95h-1.95zM33.17 64.39h3.90v1.95h-3.90zM40.98 64.39h1.95v1.95h-1.95zM52.68 64.39h5.85v1.95h-5.85zM62.44 64.39h1.95v1.95h-1.95zM70.24 64.39h5.85v1.95h-5.85zM78.05 64.39h1.95v1.95h-1.95zM0.00 66.34h13.66v1.95h-13.66zM15.61 66.34h1.95v1.95h-1.95zM29.27 66.34h3.90v1.95h-3.90zM35.12 66.34h1.95v1.95h-1.95zM46.83 66.34h1.95v1.95h-1.95zM50.73 66.34h1.95v1.95h-1.95zM54.63 66.34h3.90v1.95h-3.90zM62.44 66.34h1.95v1.95h-1.95zM66.34 66.34h1.95v1.95h-1.95zM70.24 66.34h9.76v1.95h-9.76zM0.00 68.29h1.95v1.95h-1.95zM11.71 68.29h1.95v1.95h-1.95zM15.61 68.29h3.90v1.95h-3.90zM23.41 68.29h1.95v1.95h-1.95zM27.32 68.29h1.95v1.95h-1.95zM31.22 68.29h3.90v1.95h-3.90zM42.93 68.29h1.95v1.95h-1.95zM52.68 68.29h3.90v1.95h-3.90zM58.54 68.29h5.85v1.95h-5.85zM70.24 68.29h1.95v1.95h-1.95zM74.15 68.29h1.95v1.95h-1.95zM78.05 68.29h1.95v1.95h-1.95zM0.00 70.24h1.95v1.95h-1.95zM3.90 70.24h5.85v1.95h-5.85zM11.71 70.24h1.95v1.95h-1.95zM17.56 70.24h5.85v1.95h-5.85zM25.37 70.24h5.85v1.95h-5.85zM35.12 70.24h3.90v1.95h-3.90zM44.88 70.24h1.95v1.95h-1.95zM52.68 70.24h5.85v1.95h-5.85zM60.49 70.24h13.66v1.95h-13.66zM76.10 70.24h3.90v1.95h-3.90zM0.00 72.20h1.95v1.95h-1.95zM3.90 72.20h5.85v1.95h-5.85zM11.71 72.20h1.95v1.95h-1.95zM15.61 72.20h3.90v1.95h-3.90zM21.46 72.20h1.95v1.95h-1.95zM25.37 72.20h3.90v1.95h-3.90zM31.22 72.20h3.90v1.95h-3.90zM40.98 72.20h1.95v1.95h-1.95zM48.78 72.20h1.95v1.95h-1.95zM54.63 72.20h11.71v1.95h-11.71zM68.29 72.20h1.95v1.95h-1.95zM72.20 72.20h3.90v1.95h-3.90zM78.05 72.20h1.95v1.95h-1.95zM0.00 74.15h1.95v1.95h-1.95zM3.90 74.15h5.85v1.95h-5.85zM11.71 74.15h1.95v1.95h-1.95zM17.56 74.15h1.95v1.95h-1.95zM21.46 74.15h1.95v1.95h-1.95zM25.37 74.15h1.95v1.95h-1.95zM29.27 74.15h1.95v1.95h-1.95zM33.17 74.15h5.85v1.95h-5.85zM42.93 74.15h1.95v1.95h-1.95zM46.83 74.15h3.90v1.95h-3.90zM52.68 74.15h5.85v1.95h-5.85zM60.49 74.15h1.95v1.95h-1.95zM68.29 74.15h11.71v1.95h-11.71zM0.00 76.10h1.95v1.95h-1.95zM11.71 76.10h1.95v1.95h-1.95zM17.56 76.10h1.95v1.95h-1.95zM21.46 76.10h1.95v1.95h-1.95zM25.37 76.10h3.90v1.95h-3.90zM31.22 76.10h3.90v1.95h-3.90zM39.02 76.10h5.85v1.95h-5.85zM46.83 76.10h1.95v1.95h-1.95zM50.73 76.10h1.95v1.95h-1.95zM54.63 76.10h1.95v1.95h-1.95zM68.29 76.10h1.95v1.95h-1.95zM74.15 76.10h1.95v1.95h-1.95zM78.05 76.10h1.95v1.95h-1.95zM0.00 78.05h13.66v1.95h-13.66zM21.46 78.05h3.90v1.95h-3.90zM29.27 78.05h1.95v1.95h-1.95zM35.12 78.05h1.95v1.95h-1.95zM39.02 78.05h1.95v1.95h-1.95zM42.93 78.05h3.90v1.95h-3.90zM60.49 78.05h1.95v1.95h-1.95zM66.34 78.05h1.95v1.95h-1.95zM70.24 78.05h1.95v1.95h-1.95zM76.10 78.05h3.90v1.95h-3.90z" fill="#000" shape-rendering="crispEdges"/><rect x="30" y="30" width="20" height="20" rx="2.500" fill="#fff"/><rect x="30.800" y="30.800" width="18.500" height="18.500" rx="2.500" fill="#f01010"/><g font-family="Liberation Sans,Noto Sans CJK SC,sans-serif" font-weight="bold" font-size="6.200" fill="#fff" text-anchor="middle"><text x="40" y="38.500">友锋</text><text x="40" y="46">软件</text></g></svg></div>
<div class="lab serif" style="left:91px;top:572px;font-size:16px;line-height:20px;color:#222;font-weight:300">微信客服:</div>
<div class="lab serif" style="left:91px;top:592px;font-size:15px;line-height:18px;color:#0000ff">youfengSupport</div>
<div class="lab serif" style="left:91px;top:629px;font-size:16px;line-height:20px;color:#222;font-weight:300">QQ 客服: <span style="color:#1a66cc;text-decoration:underline">80970230</span></div>
<div class="lab serif" style="left:12px;top:656px;font-size:16px;line-height:20px"><span style="color:#f00">常见问题</span><span class="cjk">：</span><span style="color:#1a66cc;text-decoration:underline">怎样添加文字、字幕</span></div>
<div class="lab serif" style="left:7px;top:700px;font-size:16px;line-height:18px;color:#222;font-weight:300"><span style="display:inline-block;width:22px;font-size:15px">1.</span>点击<span class="cjk">“</span><span style="color:#1a66cc;text-decoration:underline">添加照片</span><span class="cjk">”</span>命令添加</div>
<div class="lab serif" style="left:29px;top:717px;font-size:16px;line-height:18px;color:#222;font-weight:300">照片。</div>
<div class="abs" style="left:30px;top:735px;width:200px;height:18px;overflow:hidden"><div style="display:inline-block;background:#ffffcc;font-size:12px;line-height:15px;white-space:nowrap;font-family:'Liberation Serif','Noto Serif CJK SC',serif"><b style="color:#f00">备注</b><b class="cjk">：</b>可以一次选中多幅照片，也可<br>以按住Ctrl键后逐张选择照片添加</div></div>
<div class="abs" style="left:255px;top:602px;width:15px;height:71px;background:#cdcdcd"></div>
<svg class="abs" style="left:252px;top:578px" width="20" height="170" viewBox="0 0 20 170"><g stroke="#555" stroke-width="2.600" fill="none"><path d="M5 14l5-5 5 5"/><path d="M5 151l5 5 5-5"/></g></svg>
<div class="abs" style="left:0;top:761px;width:1200px;height:15px;background:#f0f0f0"></div><div class="abs" style="left:0;top:760px;width:280px;height:1px;background:#dcdcdc"></div>
<div class="abs" style="left:277px;top:762px;width:1px;height:14px;background:#d0d0d0"></div>
<div class="abs" style="left:555px;top:762px;width:1px;height:14px;background:#d0d0d0"></div>
<div class="lab" style="left:281px;top:766px">共 2 张相片</div>
<svg class="abs" style="left:1188px;top:764px" width="12" height="12" viewBox="0 0 12 12"><g fill="#b8b8b8"><rect x="9" y="9" width="2" height="2"/><rect x="9" y="5" width="2" height="2"/><rect x="5" y="9" width="2" height="2"/><rect x="9" y="1" width="2" height="2"/><rect x="5" y="5" width="2" height="2"/><rect x="1" y="9" width="2" height="2"/></g></svg>
<div class="abs" style="left:280px;top:242px;width:920px;height:519px;background:#fff;border:1px solid #828790;border-right:none"></div>
<div class="abs" style="left:303px;top:247px;width:100px;height:125px;border:1px solid #8c8c8c;background:#fff"></div>
<div class="abs" style="left:305px;top:263px;width:96px;height:92px;overflow:hidden"><svg viewBox="0 0 122 92" width="122" height="92"><defs><linearGradient id="phg" x1="0" y1="0" x2="0" y2="92" gradientUnits="userSpaceOnUse"><stop offset="0" stop-color="#ffc020"/><stop offset=".45" stop-color="#ff9414"/><stop offset="1" stop-color="#ff4e06"/></linearGradient><filter id="phb"><feGaussianBlur stdDeviation=".55"/></filter><filter id="phb2"><feGaussianBlur stdDeviation="1.1"/></filter></defs><rect width="122" height="92" fill="#fffdf8"/><rect x="8" y="6" width="106" height="78" fill="#4f6a34"/><g filter="url(#phb2)"><circle cx="42.7" cy="18.5" r="3.1" fill="#6f8f42"/><circle cx="94.4" cy="14.2" r="3.0" fill="#35502a"/><circle cx="12.9" cy="40.0" r="1.7" fill="#6f8f42"/><circle cx="66.3" cy="11.5" r="2.9" fill="#35502a"/><circle cx="74.6" cy="51.3" r="1.7" fill="#9bb060"/><circle cx="14.2" cy="23.8" r="2.9" fill="#5a7a3a"/><circle cx="39.1" cy="18.0" r="1.8" fill="#8fa858"/><circle cx="67.3" cy="58.8" r="1.8" fill="#35502a"/><circle cx="47.7" cy="48.6" r="1.7" fill="#2c431c"/><circle cx="73.4" cy="44.7" r="2.8" fill="#223616"/><circle cx="57.4" cy="77.2" r="2.4" fill="#35502a"/><circle cx="91.6" cy="60.1" r="2.1" fill="#8fa858"/><circle cx="63.6" cy="73.5" r="3.3" fill="#8fa858"/><circle cx="72.3" cy="12.6" r="2.8" fill="#5a7a3a"/><circle cx="87.7" cy="18.6" r="2.7" fill="#2c431c"/><circle cx="109.0" cy="12.9" r="2.9" fill="#223616"/><circle cx="44.4" cy="33.6" r="2.7" fill="#486a30"/><circle cx="16.2" cy="14.1" r="2.2" fill="#6f8f42"/><circle cx="15.3" cy="60.3" r="3.1" fill="#486a30"/><circle cx="38.6" cy="36.3" r="3.2" fill="#2c431c"/><circle cx="106.8" cy="34.0" r="3.0" fill="#486a30"/><circle cx="15.1" cy="65.4" r="1.8" fill="#35502a"/><circle cx="50.4" cy="76.7" r="2.7" fill="#5a7a3a"/><circle cx="55.7" cy="48.8" r="3.7" fill="#9bb060"/><circle cx="98.9" cy="28.2" r="2.5" fill="#223616"/><circle cx="80.0" cy="35.9" r="2.1" fill="#6f8f42"/><circle cx="27.3" cy="24.6" r="2.1" fill="#486a30"/><circle cx="95.4" cy="20.9" r="2.2" fill="#5a7a3a"/><circle cx="52.6" cy="35.1" r="2.9" fill="#5a7a3a"/><circle cx="80.8" cy="46.2" r="3.0" fill="#2c431c"/><circle cx="56.5" cy="73.2" r="3.9" fill="#9bb060"/><circle cx="50.4" cy="37.0" r="2.7" fill="#9bb060"/><circle cx="15.5" cy="12.1" r="2.0" fill="#5a7a3a"/><circle cx="20.4" cy="52.7" r="1.8" fill="#5a7a3a"/><circle cx="64.8" cy="79.1" r="3.0" fill="#6f8f42"/><circle cx="99.9" cy="53.7" r="1.9" fill="#8fa858"/><circle cx="108.4" cy="52.8" r="2.7" fill="#6f8f42"/><circle cx="97.3" cy="82.5" r="2.7" fill="#486a30"/><circle cx="41.4" cy="18.0" r="3.4" fill="#8fa858"/><circle cx="58.8" cy="59.6" r="2.8" fill="#35502a"/><circle cx="107.9" cy="47.1" r="1.9" fill="#2c431c"/><circle cx="87.8" cy="29.7" r="3.1" fill="#6f8f42"/><circle cx="81.4" cy="26.8" r="2.4" fill="#5a7a3a"/><circle cx="46.0" cy="23.9" r="2.9" fill="#223616"/><circle cx="75.2" cy="53.6" r="3.5" fill="#35502a"/><circle cx="92.8" cy="69.2" r="3.3" fill="#35502a"/><circle cx="29.8" cy="44.5" r="3.3" fill="#2c431c"/><circle cx="91.2" cy="42.9" r="2.0" fill="#223616"/><circle cx="55.5" cy="78.2" r="4.0" fill="#223616"/><circle cx="17.4" cy="14.8" r="2.7" fill="#223616"/><circle cx="30.3" cy="54.4" r="3.8" fill="#2c431c"/><circle cx="58.9" cy="56.6" r="3.5" fill="#6f8f42"/><circle cx="95.8" cy="16.1" r="2.5" fill="#35502a"/><circle cx="58.7" cy="20.6" r="3.5" fill="#223616"/><circle cx="18.0" cy="78.9" r="3.3" fill="#486a30"/><circle cx="50.7" cy="79.0" r="3.3" fill="#5a7a3a"/><circle cx="112.3" cy="9.1" r="3.0" fill="#486a30"/><circle cx="92.9" cy="18.1" r="3.6" fill="#486a30"/><circle cx="77.4" cy="33.6" r="2.9" fill="#5a7a3a"/><circle cx="11.2" cy="67.8" r="3.3" fill="#6f8f42"/><circle cx="63.8" cy="78.0" r="2.6" fill="#35502a"/><circle cx="94.9" cy="23.0" r="2.1" fill="#8fa858"/><circle cx="61.1" cy="65.0" r="2.3" fill="#9bb060"/><circle cx="95.8" cy="11.6" r="3.3" fill="#486a30"/><circle cx="77.9" cy="68.9" r="2.8" fill="#5a7a3a"/><circle cx="64.3" cy="46.8" r="1.5" fill="#486a30"/><circle cx="89.8" cy="53.3" r="3.4" fill="#5a7a3a"/><circle cx="26.9" cy="43.0" r="3.3" fill="#2c431c"/><circle cx="42.9" cy="46.4" r="2.9" fill="#6f8f42"/><circle cx="100.9" cy="11.3" r="2.0" fill="#2c431c"/><circle cx="89.3" cy="45.6" r="2.9" fill="#6f8f42"/><circle cx="55.1" cy="53.6" r="2.8" fill="#35502a"/><circle cx="81.0" cy="41.4" r="2.8" fill="#486a30"/><circle cx="61.8" cy="25.8" r="2.8" fill="#8fa858"/><circle cx="105.0" cy="74.8" r="2.0" fill="#486a30"/><circle cx="23.3" cy="16.2" r="2.6" fill="#6f8f42"/><circle cx="78.8" cy="39.6" r="2.0" fill="#8fa858"/><circle cx="90.5" cy="75.2" r="1.9" fill="#223616"/><circle cx="23.9" cy="74.1" r="3.9" fill="#35502a"/><circle cx="86.7" cy="14.2" r="3.7" fill="#5a7a3a"/><circle cx="111.9" cy="70.3" r="1.9" fill="#9bb060"/><circle cx="112.4" cy="37.7" r="2.6" fill="#223616"/><circle cx="42.1" cy="61.9" r="1.5" fill="#486a30"/><circle cx="54.8" cy="8.4" r="2.3" fill="#8fa858"/><circle cx="62.3" cy="11.9" r="4.0" fill="#35502a"/><circle cx="110.1" cy="15.0" r="2.2" fill="#2c431c"/><circle cx="103.2" cy="20.8" r="3.4" fill="#9bb060"/><circle cx="97.4" cy="58.4" r="3.9" fill="#9bb060"/><circle cx="24.5" cy="76.9" r="2.9" fill="#223616"/><circle cx="18.3" cy="11.4" r="3.2" fill="#9bb060"/><circle cx="102.1" cy="27.4" r="1.5" fill="#6f8f42"/><circle cx="92.4" cy="13.4" r="3.6" fill="#6f8f42"/><circle cx="36.5" cy="16.2" r="1.5" fill="#9bb060"/><circle cx="105.4" cy="27.4" r="1.8" fill="#35502a"/><circle cx="106.6" cy="80.7" r="2.2" fill="#5a7a3a"/><circle cx="30.0" cy="30.7" r="2.3" fill="#35502a"/><circle cx="39.2" cy="45.0" r="1.9" fill="#223616"/><circle cx="92.6" cy="82.6" r="1.6" fill="#2c431c"/><circle cx="85.2" cy="48.9" r="2.0" fill="#486a30"/><circle cx="34.6" cy="41.0" r="3.1" fill="#9bb060"/><circle cx="77.3" cy="48.5" r="3.7" fill="#8fa858"/><circle cx="80.5" cy="81.7" r="2.4" fill="#5a7a3a"/><circle cx="51.1" cy="33.4" r="1.6" fill="#5a7a3a"/><circle cx="10.5" cy="54.5" r="3.7" fill="#9bb060"/><circle cx="26.0" cy="13.4" r="3.6" fill="#8fa858"/><circle cx="71.3" cy="59.6" r="1.6" fill="#5a7a3a"/><circle cx="25.4" cy="40.9" r="2.2" fill="#223616"/><circle cx="110.2" cy="48.6" r="2.1" fill="#8fa858"/><circle cx="31.7" cy="20.9" r="2.3" fill="#6f8f42"/><circle cx="58.4" cy="45.2" r="2.0" fill="#2c431c"/><circle cx="18.4" cy="69.1" r="1.9" fill="#2c431c"/><circle cx="50.0" cy="29.8" r="3.1" fill="#6f8f42"/><circle cx="69.9" cy="47.2" r="3.4" fill="#9bb060"/><circle cx="88.5" cy="61.8" r="2.7" fill="#8fa858"/><circle cx="84.3" cy="55.9" r="1.6" fill="#9bb060"/><circle cx="85.3" cy="68.7" r="1.8" fill="#2c431c"/><circle cx="94.9" cy="51.4" r="3.7" fill="#35502a"/><circle cx="17.8" cy="10.2" r="3.1" fill="#6f8f42"/><circle cx="48.2" cy="41.3" r="1.6" fill="#2c431c"/><circle cx="74.1" cy="58.7" r="2.7" fill="#2c431c"/><circle cx="56.5" cy="12.3" r="3.8" fill="#6f8f42"/><circle cx="77.6" cy="12.0" r="3.3" fill="#8fa858"/><circle cx="93.2" cy="71.3" r="2.1" fill="#35502a"/><circle cx="33.0" cy="56.4" r="2.7" fill="#9bb060"/><circle cx="17.0" cy="76.2" r="2.2" fill="#2c431c"/><circle cx="73.2" cy="55.8" r="1.7" fill="#5a7a3a"/><circle cx="43.5" cy="56.5" r="3.2" fill="#5a7a3a"/><circle cx="10.3" cy="11.6" r="2.2" fill="#6f8f42"/><circle cx="81.0" cy="58.4" r="2.2" fill="#8fa858"/><circle cx="57.3" cy="42.4" r="1.8" fill="#35502a"/><circle cx="41.4" cy="13.5" r="2.7" fill="#8fa858"/><circle cx="56.7" cy="69.3" r="3.9" fill="#486a30"/><circle cx="112.4" cy="36.4" r="3.8" fill="#35502a"/><circle cx="16.8" cy="13.9" r="3.4" fill="#8fa858"/><circle cx="108.1" cy="17.1" r="3.6" fill="#8fa858"/><circle cx="101.2" cy="60.5" r="2.1" fill="#486a30"/><circle cx="50.0" cy="19.1" r="3.9" fill="#486a30"/><circle cx="51.2" cy="62.3" r="2.5" fill="#9bb060"/><circle cx="41.9" cy="70.9" r="1.5" fill="#223616"/><circle cx="96.3" cy="16.1" r="3.8" fill="#2c431c"/><circle cx="102.8" cy="29.0" r="2.4" fill="#9bb060"/><circle cx="49.6" cy="73.1" r="1.7" fill="#9bb060"/><circle cx="87.6" cy="71.9" r="2.2" fill="#2c431c"/><circle cx="95.8" cy="28.7" r="3.8" fill="#35502a"/><circle cx="110.0" cy="40.2" r="2.3" fill="#223616"/><circle cx="90.7" cy="39.5" r="1.6" fill="#9bb060"/><circle cx="104.0" cy="78.5" r="2.9" fill="#6f8f42"/><circle cx="14.1" cy="62.7" r="2.6" fill="#5a7a3a"/><circle cx="76.0" cy="28.8" r="1.6" fill="#5a7a3a"/><circle cx="26.8" cy="38.5" r="2.2" fill="#8fa858"/><circle cx="85.9" cy="81.2" r="2.2" fill="#35502a"/><circle cx="40.3" cy="49.4" r="2.5" fill="#5a7a3a"/><circle cx="75.9" cy="12.7" r="2.8" fill="#486a30"/><circle cx="66.2" cy="41.4" r="2.3" fill="#486a30"/><circle cx="53.5" cy="48.6" r="2.1" fill="#5a7a3a"/><circle cx="44.6" cy="13.9" r="2.1" fill="#8fa858"/><circle cx="93.2" cy="22.4" r="1.6" fill="#9bb060"/><circle cx="48.8" cy="63.7" r="2.0" fill="#8fa858"/><circle cx="44.2" cy="11.7" r="2.2" fill="#223616"/><circle cx="22.1" cy="45.3" r="3.1" fill="#35502a"/><circle cx="18.6" cy="75.2" r="2.5" fill="#486a30"/><circle cx="53.9" cy="30.7" r="3.5" fill="#2c431c"/><circle cx="22.2" cy="39.3" r="3.4" fill="#486a30"/><circle cx="109.7" cy="44.2" r="1.7" fill="#486a30"/><circle cx="110.1" cy="25.9" r="1.8" fill="#5a7a3a"/><circle cx="24.8" cy="80.9" r="1.8" fill="#486a30"/><circle cx="17.8" cy="66.0" r="1.5" fill="#5a7a3a"/><circle cx="33.2" cy="76.9" r="3.1" fill="#8fa858"/><circle cx="109.1" cy="54.6" r="2.8" fill="#9bb060"/><circle cx="81.7" cy="15.5" r="1.7" fill="#35502a"/><ellipse cx="28" cy="76" rx="14" ry="7" fill="#1e2e14" opacity=".8"/><ellipse cx="70" cy="80" rx="14" ry="5" fill="#26381a" opacity=".8"/><ellipse cx="24" cy="26" rx="8" ry="5" fill="#8aa050" opacity=".7"/></g><g filter="url(#phb)"><circle cx="27.0" cy="18.0" r="3.0" fill="#f0b8a0"/><circle cx="25.7" cy="19.1" r="1.5" fill="#f0b8a0"/><circle cx="25.6" cy="17.1" r="1.5" fill="#f8d0c0"/><circle cx="27.4" cy="16.4" r="1.5" fill="#f8d0c0"/><circle cx="28.6" cy="17.9" r="1.5" fill="#ee5aa2"/><circle cx="27.6" cy="19.5" r="1.5" fill="#dc2c7e"/><circle cx="26.6" cy="17.7" r="1.3" fill="#fff4ea"/><circle cx="27.0" cy="18.0" r="0.5" fill="#f0c890"/><circle cx="33.0" cy="19.0" r="3.0" fill="#f0b8a0"/><circle cx="33.9" cy="17.6" r="1.5" fill="#f0b8a0"/><circle cx="34.6" cy="19.4" r="1.5" fill="#dc2c7e"/><circle cx="33.1" cy="20.6" r="1.5" fill="#f0b8a0"/><circle cx="31.5" cy="19.6" r="1.5" fill="#f0b8a0"/><circle cx="31.9" cy="17.7" r="1.5" fill="#f8d0c0"/><circle cx="33.7" cy="19.3" r="1.3" fill="#fff4ea"/><circle cx="33.0" cy="19.0" r="0.5" fill="#f0c890"/><circle cx="43.0" cy="18.0" r="2.6" fill="#f0b8a0"/><circle cx="42.5" cy="19.3" r="1.3" fill="#f8d0c0"/><circle cx="41.6" cy="17.9" r="1.3" fill="#f0b8a0"/><circle cx="42.6" cy="16.6" r="1.3" fill="#dc2c7e"/><circle cx="44.2" cy="17.2" r="1.3" fill="#dc2c7e"/><circle cx="44.1" cy="18.9" r="1.3" fill="#f8d0c0"/><circle cx="42.6" cy="18.3" r="1.1" fill="#fff4ea"/><circle cx="43.0" cy="18.0" r="0.5" fill="#f0c890"/><circle cx="35.0" cy="10.0" r="2.6" fill="#f0b8a0"/><circle cx="36.3" cy="9.3" r="1.3" fill="#f0b8a0"/><circle cx="36.0" cy="11.0" r="1.3" fill="#dc2c7e"/><circle cx="34.4" cy="11.3" r="1.3" fill="#f8d0c0"/><circle cx="33.6" cy="9.8" r="1.3" fill="#ee5aa2"/><circle cx="34.8" cy="8.6" r="1.3" fill="#dc2c7e"/><circle cx="34.8" cy="9.8" r="1.1" fill="#fff4ea"/><circle cx="35.0" cy="10.0" r="0.5" fill="#f0c890"/><circle cx="80.5" cy="13.5" r="4.2" fill="#e0203a"/><circle cx="82.8" cy="13.6" r="2.1" fill="#ee5aa2"/><circle cx="81.1" cy="15.7" r="2.1" fill="#f04a5a"/><circle cx="78.6" cy="14.8" r="2.1" fill="#e0203a"/><circle cx="78.7" cy="12.1" r="2.1" fill="#dc2c7e"/><circle cx="81.3" cy="11.3" r="2.1" fill="#e0203a"/><circle cx="80.2" cy="14.0" r="1.8" fill="#f88a90"/><circle cx="80.5" cy="13.5" r="0.6" fill="#f0c890"/><circle cx="87.0" cy="10.0" r="3.0" fill="#e0203a"/><circle cx="87.2" cy="11.6" r="1.5" fill="#e0203a"/><circle cx="85.5" cy="10.7" r="1.5" fill="#ee5aa2"/><circle cx="85.9" cy="8.8" r="1.5" fill="#ee5aa2"/><circle cx="87.8" cy="8.6" r="1.5" fill="#f04a5a"/><circle cx="88.6" cy="10.3" r="1.5" fill="#dc2c7e"/><circle cx="87.2" cy="10.6" r="1.3" fill="#f88a90"/><circle cx="87.0" cy="10.0" r="0.5" fill="#f0c890"/><circle cx="55.0" cy="14.0" r="5.0" fill="#e8408f"/><circle cx="52.3" cy="14.3" r="2.5" fill="#f58cc0"/><circle cx="53.9" cy="11.5" r="2.5" fill="#e8408f"/><circle cx="57.1" cy="12.2" r="2.5" fill="#dc2c7e"/><circle cx="57.4" cy="15.4" r="2.5" fill="#f58cc0"/><circle cx="54.4" cy="16.7" r="2.5" fill="#e8408f"/><circle cx="54.2" cy="14.2" r="2.1" fill="#fff0f6"/><circle cx="55.0" cy="14.0" r="0.7" fill="#f0c890"/><circle cx="66.0" cy="14.0" r="5.0" fill="#e8408f"/><circle cx="63.6" cy="15.4" r="2.5" fill="#f58cc0"/><circle cx="63.9" cy="12.2" r="2.5" fill="#e8408f"/><circle cx="67.1" cy="11.5" r="2.5" fill="#dc2c7e"/><circle cx="68.7" cy="14.3" r="2.5" fill="#dc2c7e"/><circle cx="66.6" cy="16.7" r="2.5" fill="#ee5aa2"/><circle cx="66.4" cy="14.8" r="2.1" fill="#fff0f6"/><circle cx="66.0" cy="14.0" r="0.7" fill="#f0c890"/><circle cx="76.0" cy="21.0" r="5.0" fill="#e8408f"/><circle cx="78.5" cy="19.8" r="2.5" fill="#ee5aa2"/><circle cx="77.9" cy="23.0" r="2.5" fill="#e8408f"/><circle cx="74.7" cy="23.4" r="2.5" fill="#e8408f"/><circle cx="73.3" cy="20.5" r="2.5" fill="#dc2c7e"/><circle cx="75.7" cy="18.3" r="2.5" fill="#f58cc0"/><circle cx="75.7" cy="21.4" r="2.1" fill="#fff0f6"/><circle cx="76.0" cy="21.0" r="0.7" fill="#f0c890"/><circle cx="50.0" cy="27.0" r="4.0" fill="#e8408f"/><circle cx="51.2" cy="25.1" r="2.0" fill="#ee5aa2"/><circle cx="52.1" cy="27.5" r="2.0" fill="#dc2c7e"/><circle cx="50.2" cy="29.2" r="2.0" fill="#e8408f"/><circle cx="48.0" cy="27.8" r="2.0" fill="#f58cc0"/><circle cx="48.6" cy="25.3" r="2.0" fill="#f58cc0"/><circle cx="49.3" cy="26.3" r="1.7" fill="#fff0f6"/><circle cx="50.0" cy="27.0" r="0.6" fill="#f0c890"/><circle cx="60.0" cy="21.0" r="7.0" fill="#e8408f"/><circle cx="56.6" cy="22.9" r="3.5" fill="#f58cc0"/><circle cx="57.2" cy="18.4" r="3.5" fill="#e8408f"/><circle cx="61.6" cy="17.5" r="3.5" fill="#dc2c7e"/><circle cx="63.8" cy="21.5" r="3.5" fill="#ee5aa2"/><circle cx="60.7" cy="24.8" r="3.5" fill="#ee5aa2"/><circle cx="60.5" cy="20.9" r="2.9" fill="#fff0f6"/><circle cx="60.0" cy="21.0" r="1.0" fill="#f0c890"/><circle cx="70.0" cy="27.0" r="7.0" fill="#e8408f"/><circle cx="73.7" cy="28.2" r="3.5" fill="#dc2c7e"/><circle cx="70.0" cy="30.8" r="3.5" fill="#e8408f"/><circle cx="66.3" cy="28.2" r="3.5" fill="#ee5aa2"/><circle cx="67.7" cy="23.9" r="3.5" fill="#dc2c7e"/><circle cx="72.2" cy="23.9" r="3.5" fill="#e8408f"/><circle cx="69.7" cy="27.4" r="2.9" fill="#fff0f6"/><circle cx="70.0" cy="27.0" r="1.0" fill="#f0c890"/><circle cx="80.0" cy="32.0" r="6.0" fill="#e8408f"/><circle cx="76.7" cy="32.5" r="3.0" fill="#dc2c7e"/><circle cx="78.5" cy="29.1" r="3.0" fill="#e8408f"/><circle cx="82.3" cy="29.7" r="3.0" fill="#dc2c7e"/><circle cx="82.9" cy="33.5" r="3.0" fill="#f58cc0"/><circle cx="79.5" cy="35.3" r="3.0" fill="#dc2c7e"/><circle cx="79.3" cy="31.3" r="2.5" fill="#fff0f6"/><circle cx="80.0" cy="32.0" r="0.8" fill="#f0c890"/><circle cx="87.0" cy="27.0" r="7.0" fill="#e8408f"/><circle cx="90.4" cy="25.1" r="3.5" fill="#ee5aa2"/><circle cx="89.8" cy="29.6" r="3.5" fill="#e8408f"/><circle cx="85.4" cy="30.5" r="3.5" fill="#f58cc0"/><circle cx="83.2" cy="26.5" r="3.5" fill="#ee5aa2"/><circle cx="86.3" cy="23.2" r="3.5" fill="#ee5aa2"/><circle cx="86.6" cy="27.7" r="2.9" fill="#fff0f6"/><circle cx="87.0" cy="27.0" r="1.0" fill="#f0c890"/><circle cx="96.0" cy="22.0" r="6.0" fill="#e8408f"/><circle cx="93.5" cy="19.8" r="3.0" fill="#ee5aa2"/><circle cx="97.3" cy="19.0" r="3.0" fill="#ee5aa2"/><circle cx="99.3" cy="22.3" r="3.0" fill="#ee5aa2"/><circle cx="96.7" cy="25.2" r="3.0" fill="#ee5aa2"/><circle cx="93.1" cy="23.7" r="3.0" fill="#f58cc0"/><circle cx="96.4" cy="22.2" r="2.5" fill="#fff0f6"/><circle cx="96.0" cy="22.0" r="0.8" fill="#f0c890"/><circle cx="104.0" cy="30.0" r="7.0" fill="#e8408f"/><circle cx="105.3" cy="26.4" r="3.5" fill="#f58cc0"/><circle cx="107.8" cy="30.1" r="3.5" fill="#f58cc0"/><circle cx="105.1" cy="33.7" r="3.5" fill="#e8408f"/><circle cx="100.8" cy="32.2" r="3.5" fill="#f58cc0"/><circle cx="101.0" cy="27.6" r="3.5" fill="#dc2c7e"/><circle cx="104.3" cy="29.9" r="2.9" fill="#fff0f6"/><circle cx="104.0" cy="30.0" r="1.0" fill="#f0c890"/><circle cx="112.0" cy="24.0" r="5.0" fill="#e8408f"/><circle cx="112.4" cy="21.3" r="2.5" fill="#ee5aa2"/><circle cx="114.7" cy="23.6" r="2.5" fill="#dc2c7e"/><circle cx="113.2" cy="26.5" r="2.5" fill="#dc2c7e"/><circle cx="110.0" cy="25.9" r="2.5" fill="#e8408f"/><circle cx="109.6" cy="22.7" r="2.5" fill="#dc2c7e"/><circle cx="111.5" cy="24.5" r="2.1" fill="#fff0f6"/><circle cx="112.0" cy="24.0" r="0.7" fill="#f0c890"/><circle cx="98.0" cy="36.0" r="6.0" fill="#e8408f"/><circle cx="97.8" cy="32.7" r="3.0" fill="#e8408f"/><circle cx="101.1" cy="34.7" r="3.0" fill="#e8408f"/><circle cx="100.1" cy="38.5" r="3.0" fill="#ee5aa2"/><circle cx="96.3" cy="38.8" r="3.0" fill="#ee5aa2"/><circle cx="94.8" cy="35.2" r="3.0" fill="#dc2c7e"/><circle cx="97.8" cy="36.5" r="2.5" fill="#fff0f6"/><circle cx="98.0" cy="36.0" r="0.8" fill="#f0c890"/><circle cx="34.5" cy="32.5" r="7.0" fill="#e8408f"/><circle cx="37.9" cy="34.3" r="3.5" fill="#e8408f"/><circle cx="33.8" cy="36.3" r="3.5" fill="#dc2c7e"/><circle cx="30.7" cy="33.0" r="3.5" fill="#e8408f"/><circle cx="32.8" cy="29.0" r="3.5" fill="#e8408f"/><circle cx="37.3" cy="29.8" r="3.5" fill="#dc2c7e"/><circle cx="33.8" cy="31.8" r="2.9" fill="#fff0f6"/><circle cx="34.5" cy="32.5" r="1.0" fill="#f0c890"/><circle cx="25.0" cy="36.0" r="3.0" fill="#e8408f"/><circle cx="23.4" cy="35.5" r="1.5" fill="#ee5aa2"/><circle cx="25.0" cy="34.4" r="1.5" fill="#e8408f"/><circle cx="26.6" cy="35.5" r="1.5" fill="#dc2c7e"/><circle cx="26.0" cy="37.3" r="1.5" fill="#f58cc0"/><circle cx="24.0" cy="37.3" r="1.5" fill="#f58cc0"/><circle cx="24.6" cy="35.3" r="1.3" fill="#fff0f6"/><circle cx="25.0" cy="36.0" r="0.5" fill="#f0c890"/><circle cx="20.0" cy="40.0" r="2.0" fill="#e8408f"/><circle cx="20.9" cy="40.6" r="1.0" fill="#dc2c7e"/><circle cx="19.7" cy="41.1" r="1.0" fill="#dc2c7e"/><circle cx="18.9" cy="40.0" r="1.0" fill="#e8408f"/><circle cx="19.6" cy="39.0" r="1.0" fill="#e8408f"/><circle cx="20.9" cy="39.3" r="1.0" fill="#e8408f"/><circle cx="19.9" cy="40.2" r="0.8" fill="#fff0f6"/><circle cx="20.0" cy="40.0" r="0.5" fill="#f0c890"/><circle cx="22.0" cy="52.0" r="1.6" fill="#e8408f"/><circle cx="21.6" cy="51.2" r="0.8" fill="#f58cc0"/><circle cx="22.6" cy="51.4" r="0.8" fill="#ee5aa2"/><circle cx="22.8" cy="52.4" r="0.8" fill="#ee5aa2"/><circle cx="21.9" cy="52.9" r="0.8" fill="#ee5aa2"/><circle cx="21.1" cy="52.1" r="0.8" fill="#ee5aa2"/><circle cx="21.8" cy="52.4" r="0.7" fill="#fff0f6"/><circle cx="22.0" cy="52.0" r="0.5" fill="#f0c890"/><circle cx="48.0" cy="46.0" r="6.0" fill="#e8408f"/><circle cx="49.0" cy="49.1" r="3.0" fill="#e8408f"/><circle cx="45.3" cy="48.0" r="3.0" fill="#e8408f"/><circle cx="45.3" cy="44.1" r="3.0" fill="#e8408f"/><circle cx="49.0" cy="42.9" r="3.0" fill="#e8408f"/><circle cx="51.3" cy="46.0" r="3.0" fill="#e8408f"/><circle cx="47.7" cy="46.7" r="2.5" fill="#fff0f6"/><circle cx="48.0" cy="46.0" r="0.8" fill="#f0c890"/><circle cx="88.0" cy="48.0" r="5.0" fill="#e8408f"/><circle cx="89.0" cy="50.5" r="2.5" fill="#f58cc0"/><circle cx="85.9" cy="49.8" r="2.5" fill="#dc2c7e"/><circle cx="85.7" cy="46.6" r="2.5" fill="#ee5aa2"/><circle cx="88.7" cy="45.3" r="2.5" fill="#e8408f"/><circle cx="90.7" cy="47.8" r="2.5" fill="#e8408f"/><circle cx="88.2" cy="47.4" r="2.1" fill="#fff0f6"/><circle cx="88.0" cy="48.0" r="0.7" fill="#f0c890"/><circle cx="38.0" cy="51.6" r="9.0" fill="#e8408f"/><circle cx="33.2" cy="52.7" r="4.5" fill="#f58cc0"/><circle cx="35.4" cy="47.4" r="4.5" fill="#f58cc0"/><circle cx="41.2" cy="47.9" r="4.5" fill="#f58cc0"/><circle cx="42.6" cy="53.5" r="4.5" fill="#dc2c7e"/><circle cx="37.6" cy="56.5" r="4.5" fill="#e8408f"/><circle cx="38.5" cy="52.3" r="3.8" fill="#fff0f6"/><circle cx="38.0" cy="51.6" r="1.3" fill="#f0c890"/><circle cx="61.0" cy="51.6" r="9.0" fill="#e8408f"/><circle cx="65.8" cy="52.8" r="4.5" fill="#ee5aa2"/><circle cx="61.3" cy="56.5" r="4.5" fill="#e8408f"/><circle cx="56.4" cy="53.4" r="4.5" fill="#f58cc0"/><circle cx="57.9" cy="47.8" r="4.5" fill="#f58cc0"/><circle cx="63.7" cy="47.4" r="4.5" fill="#e8408f"/><circle cx="61.2" cy="52.1" r="3.8" fill="#fff0f6"/><circle cx="61.0" cy="51.6" r="1.3" fill="#f0c890"/><circle cx="50.0" cy="58.0" r="9.0" fill="#e8408f"/><circle cx="51.7" cy="62.6" r="4.5" fill="#f58cc0"/><circle cx="46.1" cy="61.1" r="4.5" fill="#ee5aa2"/><circle cx="45.9" cy="55.2" r="4.5" fill="#e8408f"/><circle cx="51.4" cy="53.2" r="4.5" fill="#dc2c7e"/><circle cx="54.9" cy="57.8" r="4.5" fill="#ee5aa2"/><circle cx="50.4" cy="58.3" r="3.8" fill="#fff0f6"/><circle cx="50.0" cy="58.0" r="1.3" fill="#f0c890"/><circle cx="30.5" cy="64.7" r="8.0" fill="#e8408f"/><circle cx="34.9" cy="64.9" r="4.0" fill="#ee5aa2"/><circle cx="31.7" cy="68.9" r="4.0" fill="#e8408f"/><circle cx="26.8" cy="67.1" r="4.0" fill="#f58cc0"/><circle cx="27.0" cy="62.0" r="4.0" fill="#ee5aa2"/><circle cx="32.0" cy="60.6" r="4.0" fill="#ee5aa2"/><circle cx="29.9" cy="64.2" r="3.4" fill="#fff0f6"/><circle cx="30.5" cy="64.7" r="1.1" fill="#f0c890"/><circle cx="42.0" cy="68.0" r="8.0" fill="#e8408f"/><circle cx="41.9" cy="72.4" r="4.0" fill="#e8408f"/><circle cx="37.8" cy="69.2" r="4.0" fill="#f58cc0"/><circle cx="39.5" cy="64.4" r="4.0" fill="#ee5aa2"/><circle cx="44.7" cy="64.5" r="4.0" fill="#dc2c7e"/><circle cx="46.1" cy="69.5" r="4.0" fill="#ee5aa2"/><circle cx="41.5" cy="67.7" r="3.4" fill="#fff0f6"/><circle cx="42.0" cy="68.0" r="1.1" fill="#f0c890"/><circle cx="63.0" cy="66.0" r="7.0" fill="#e8408f"/><circle cx="64.1" cy="69.7" r="3.5" fill="#dc2c7e"/><circle cx="59.8" cy="68.2" r="3.5" fill="#dc2c7e"/><circle cx="59.9" cy="63.7" r="3.5" fill="#f58cc0"/><circle cx="64.3" cy="62.4" r="3.5" fill="#dc2c7e"/><circle cx="66.8" cy="66.1" r="3.5" fill="#f58cc0"/><circle cx="63.5" cy="66.3" r="2.9" fill="#fff0f6"/><circle cx="63.0" cy="66.0" r="1.0" fill="#f0c890"/><circle cx="54.0" cy="71.0" r="9.0" fill="#e8408f"/><circle cx="56.8" cy="75.1" r="4.5" fill="#f58cc0"/><circle cx="51.0" cy="74.9" r="4.5" fill="#e8408f"/><circle cx="49.3" cy="69.3" r="4.5" fill="#dc2c7e"/><circle cx="54.1" cy="66.1" r="4.5" fill="#ee5aa2"/><circle cx="58.7" cy="69.6" r="4.5" fill="#dc2c7e"/><circle cx="54.8" cy="71.3" r="3.8" fill="#fff0f6"/><circle cx="54.0" cy="71.0" r="1.3" fill="#f0c890"/><circle cx="76.6" cy="57.0" r="8.0" fill="#e8408f"/><circle cx="72.8" cy="59.2" r="4.0" fill="#f58cc0"/><circle cx="73.3" cy="54.0" r="4.0" fill="#ee5aa2"/><circle cx="78.4" cy="53.0" r="4.0" fill="#ee5aa2"/><circle cx="81.0" cy="57.5" r="4.0" fill="#dc2c7e"/><circle cx="77.5" cy="61.3" r="4.0" fill="#dc2c7e"/><circle cx="75.8" cy="57.4" r="3.4" fill="#fff0f6"/><circle cx="76.6" cy="57.0" r="1.1" fill="#f0c890"/><circle cx="86.0" cy="61.0" r="8.0" fill="#e8408f"/><circle cx="87.4" cy="56.8" r="4.0" fill="#e8408f"/><circle cx="90.4" cy="61.1" r="4.0" fill="#dc2c7e"/><circle cx="87.3" cy="65.2" r="4.0" fill="#dc2c7e"/><circle cx="82.4" cy="63.5" r="4.0" fill="#e8408f"/><circle cx="82.5" cy="58.4" r="4.0" fill="#f58cc0"/><circle cx="85.9" cy="60.5" r="3.4" fill="#fff0f6"/><circle cx="86.0" cy="61.0" r="1.1" fill="#f0c890"/><circle cx="76.6" cy="68.7" r="7.0" fill="#e8408f"/><circle cx="79.5" cy="71.2" r="3.5" fill="#f58cc0"/><circle cx="75.1" cy="72.2" r="3.5" fill="#dc2c7e"/><circle cx="72.8" cy="68.4" r="3.5" fill="#ee5aa2"/><circle cx="75.7" cy="65.0" r="3.5" fill="#dc2c7e"/><circle cx="79.9" cy="66.7" r="3.5" fill="#e8408f"/><circle cx="76.0" cy="68.0" r="2.9" fill="#fff0f6"/><circle cx="76.6" cy="68.7" r="1.0" fill="#f0c890"/><circle cx="98.0" cy="56.0" r="7.0" fill="#e8408f"/><circle cx="100.4" cy="59.0" r="3.5" fill="#dc2c7e"/><circle cx="95.9" cy="59.2" r="3.5" fill="#f58cc0"/><circle cx="94.3" cy="55.0" r="3.5" fill="#ee5aa2"/><circle cx="97.8" cy="52.2" r="3.5" fill="#e8408f"/><circle cx="101.6" cy="54.6" r="3.5" fill="#e8408f"/><circle cx="97.8" cy="55.5" r="2.9" fill="#fff0f6"/><circle cx="98.0" cy="56.0" r="1.0" fill="#f0c890"/><circle cx="108.0" cy="62.0" r="8.0" fill="#e8408f"/><circle cx="110.1" cy="65.9" r="4.0" fill="#f58cc0"/><circle cx="105.0" cy="65.2" r="4.0" fill="#f58cc0"/><circle cx="104.0" cy="60.1" r="4.0" fill="#dc2c7e"/><circle cx="108.6" cy="57.6" r="4.0" fill="#dc2c7e"/><circle cx="112.3" cy="61.2" r="4.0" fill="#e8408f"/><circle cx="107.7" cy="62.5" r="3.4" fill="#fff0f6"/><circle cx="108.0" cy="62.0" r="1.1" fill="#f0c890"/><circle cx="100.0" cy="70.0" r="6.0" fill="#e8408f"/><circle cx="103.2" cy="70.9" r="3.0" fill="#dc2c7e"/><circle cx="100.1" cy="73.3" r="3.0" fill="#ee5aa2"/><circle cx="96.9" cy="71.1" r="3.0" fill="#f58cc0"/><circle cx="98.0" cy="67.4" r="3.0" fill="#dc2c7e"/><circle cx="101.8" cy="67.3" r="3.0" fill="#f58cc0"/><circle cx="100.6" cy="70.2" r="2.5" fill="#fff0f6"/><circle cx="100.0" cy="70.0" r="0.8" fill="#f0c890"/><circle cx="112.0" cy="48.0" r="6.0" fill="#e8408f"/><circle cx="113.5" cy="45.1" r="3.0" fill="#e8408f"/><circle cx="115.3" cy="48.5" r="3.0" fill="#e8408f"/><circle cx="112.5" cy="51.3" r="3.0" fill="#dc2c7e"/><circle cx="109.1" cy="49.5" r="3.0" fill="#e8408f"/><circle cx="109.7" cy="45.7" r="3.0" fill="#dc2c7e"/><circle cx="111.5" cy="47.5" r="2.5" fill="#fff0f6"/><circle cx="112.0" cy="48.0" r="0.8" fill="#f0c890"/></g><rect x="33" y="42.300" width="56" height="1.800" fill="#f09a30" opacity=".75"/><rect x="46" y="46.500" width="24" height="1.500" fill="#f09a30" opacity=".6"/><path d="M0 0h122v92H0zM11 8v70h100V8z" fill="#fffdf8" fill-rule="evenodd" opacity="0"/><g fill="url(#phg)"><polygon points="1.2,9.9 2.8,6.4 -2.6,3.1 3.2,2.9 4.6,0.1 6.9,2.5 12.4,-0.2 8.6,5.2 14.6,8.7 7.8,8.0 7.5,13.9 4.7,9.1"/><polygon points="3.2,87.9 7.5,83.3 3.1,78.5 9.4,80.1 11.4,75.0 12.9,80.7 19.5,78.9 15.1,83.5 17.6,87.3 13.3,87.1 11.1,93.6 9.3,86.6"/><polygon points="21.7,9.5 18.1,8.8 16.0,11.6 14.8,8.3 9.6,8.6 14.0,5.3 10.3,0.5 15.8,3.0 18.2,-3.0 19.2,2.8 24.2,2.8 19.7,6.1"/><polygon points="29.1,81.5 26.7,84.5 30.8,91.2 23.8,87.6 20.3,93.7 20.2,86.2 11.9,87.1 18.8,82.8 14.3,76.2 21.2,79.5 24.0,76.7 25.3,80.5"/><polygon points="24.6,11.9 27.1,5.9 20.4,3.6 27.3,2.8 26.2,-3.7 30.2,1.7 34.5,-1.6 33.4,3.1 36.3,5.4 32.4,6.5 33.0,11.8 29.5,7.8"/><polygon points="38.9,92.3 33.2,87.1 28.0,92.5 30.2,84.8 22.9,83.4 30.2,81.5 28.3,75.5 32.9,79.0 36.9,75.9 36.7,80.8 42.1,82.7 36.5,84.9"/><polygon points="49.6,4.4 44.2,6.3 46.2,12.4 41.4,7.9 36.7,13.6 38.3,6.6 34.1,5.1 38.0,3.1 37.2,-1.6 41.1,1.8 45.3,-3.1 43.7,3.2"/><polygon points="39.0,74.7 45.5,79.4 49.4,74.3 48.9,81.0 52.4,82.2 49.1,84.4 50.7,88.7 46.8,87.2 43.3,91.2 43.2,85.7 35.6,85.1 43.0,82.1"/><polygon points="57.0,6.9 54.0,8.1 53.7,11.8 51.0,9.3 47.4,11.3 48.2,7.4 43.3,5.0 49.1,4.3 48.3,-1.6 51.9,2.8 55.3,1.3 55.1,4.7"/><polygon points="64.3,88.3 58.4,86.9 55.7,93.1 54.4,86.0 49.6,86.2 53.3,82.7 48.7,77.6 54.8,79.4 57.1,74.9 58.8,79.6 64.2,79.3 60.9,83.3"/><polygon points="68.7,1.8 67.4,4.8 70.7,8.3 65.7,7.7 64.5,11.0 62.4,8.5 59.3,8.4 60.5,5.4 55.1,1.0 62.3,2.7 63.4,-1.3 65.5,1.9"/><polygon points="71.3,77.8 71.4,82.3 76.2,83.4 71.5,85.7 75.0,92.9 69.1,88.6 64.7,93.5 66.0,86.3 58.1,85.8 64.7,82.8 63.3,77.6 68.0,80.3"/><polygon points="80.1,9.1 76.0,7.7 73.9,12.1 72.6,8.0 66.9,8.3 71.1,4.5 68.0,-0.3 73.7,2.2 76.0,-2.9 76.9,2.4 83.3,1.7 78.3,5.5"/><polygon points="86.7,82.8 83.7,85.7 83.9,89.1 80.3,87.8 77.3,91.6 76.5,87.2 68.8,86.8 75.6,83.2 74.2,78.6 78.6,80.2 81.9,76.9 82.1,82.1"/><polygon points="84.3,-1.9 88.0,2.2 92.2,0.1 90.9,4.7 95.9,7.5 90.3,8.5 90.0,13.1 86.7,9.7 82.2,12.4 84.4,7.2 80.9,5.0 84.6,3.8"/><polygon points="94.6,90.3 91.1,88.5 86.6,95.3 87.8,87.5 83.7,86.2 87.7,84.0 86.7,80.1 90.1,81.2 94.2,76.5 93.9,82.7 100.5,83.9 93.7,86.4"/><polygon points="102.0,-3.0 101.3,3.1 104.0,4.8 101.7,7.0 103.8,13.2 98.6,9.3 95.7,10.9 95.7,7.2 92.1,6.0 95.6,4.2 92.7,-2.2 97.8,1.7"/><polygon points="98.0,79.3 102.5,81.8 105.3,78.5 106.3,82.1 110.4,83.4 106.7,86.0 109.0,91.1 104.0,88.1 101.0,92.2 100.7,87.4 93.7,87.1 99.8,83.9"/><polygon points="99.8,6.7 106.1,5.1 106.4,1.9 109.2,3.6 113.0,0.5 112.4,5.1 116.3,7.1 112.3,8.8 113.0,13.9 109.1,10.0 104.3,14.9 106.6,8.3"/><polygon points="122.4,83.1 118.7,85.1 120.6,92.7 115.1,86.2 110.7,90.5 111.8,84.9 104.9,82.9 112.2,81.3 110.8,75.4 115.2,79.4 120.4,74.0 118.2,81.3"/><polygon points="123.8,13.7 120.9,8.5 117.4,9.3 118.4,6.0 116.2,3.4 119.3,2.5 120.0,-3.2 123.0,1.6 128.0,-0.5 125.0,4.5 128.9,7.4 124.1,7.6"/><polygon points="131.7,78.6 130.2,82.1 133.9,85.3 129.6,86.1 128.4,91.4 125.5,86.2 118.6,89.7 123.4,83.4 118.7,79.9 124.3,79.8 125.0,72.9 128.2,78.8"/><polygon points="4.5,21.6 4.2,17.9 -1.4,16.1 4.1,13.9 4.0,10.0 7.5,12.2 12.0,7.2 10.7,13.7 14.1,15.4 10.8,17.3 13.0,24.2 7.8,19.0"/><polygon points="111.1,6.1 114.7,12.5 118.5,10.7 117.1,14.6 121.3,17.3 116.6,18.1 115.9,22.0 113.2,18.9 109.3,20.6 109.9,16.8 104.9,13.5 111.7,13.5"/><polygon points="0.5,32.7 4.5,26.5 -0.5,22.8 6.1,23.1 7.0,19.0 9.6,22.1 13.2,21.4 11.6,25.0 15.8,28.1 10.4,28.0 10.0,33.4 7.2,29.5"/><polygon points="109.8,20.5 114.6,23.4 117.9,18.1 117.8,24.1 124.4,24.5 119.2,27.7 120.6,32.4 116.0,30.1 112.4,35.5 112.6,28.9 108.4,28.0 111.5,25.3"/><polygon points="5.1,28.1 9.0,33.8 14.2,30.9 11.6,36.4 15.5,39.1 11.0,40.1 10.2,43.6 7.5,41.0 1.8,44.7 4.5,38.8 -0.5,35.7 5.7,35.3"/><polygon points="108.9,31.5 113.5,33.2 117.0,26.9 116.8,34.6 123.2,34.4 118.4,37.8 120.2,42.3 115.6,40.4 112.1,47.1 112.5,39.1 106.4,39.3 111.5,36.2"/><polygon points="1.6,47.6 5.0,46.2 4.6,40.6 8.4,44.5 13.0,41.7 11.4,46.9 17.7,49.5 10.9,50.6 11.1,55.6 7.5,52.5 3.8,53.9 4.4,49.9"/><polygon points="122.1,55.4 115.4,51.3 113.0,54.1 112.2,50.4 107.0,50.2 111.6,47.3 108.8,42.5 113.5,44.6 116.7,39.1 116.9,45.6 121.4,46.0 117.6,48.8"/><polygon points="1.0,57.7 4.8,56.3 5.1,51.6 8.4,55.7 12.0,53.8 11.6,57.5 17.5,60.5 10.8,61.3 10.7,66.5 7.2,62.5 3.4,64.3 3.9,60.3"/><polygon points="118.4,49.4 117.3,56.2 121.7,57.6 117.7,59.8 118.2,63.6 114.8,62.3 111.2,65.2 111.1,60.6 107.2,59.0 111.2,56.8 110.2,52.5 114.1,54.8"/><polygon points="5.2,60.4 7.6,64.4 12.1,62.7 10.0,66.9 14.0,70.2 8.9,70.4 8.1,76.4 5.3,70.7 -1.4,74.2 2.5,68.2 0.6,65.4 3.9,64.4"/><polygon points="122.0,76.7 116.4,72.8 113.7,74.7 113.5,71.0 105.5,70.8 112.2,67.7 111.2,63.6 115.3,66.0 118.1,62.9 118.3,67.0 125.2,67.5 119.0,70.3"/><polygon points="8.1,73.3 9.3,76.9 14.9,77.5 10.2,80.8 12.8,86.2 7.5,83.8 3.9,89.1 3.5,82.7 -0.3,81.6 2.7,78.8 0.4,73.9 5.4,76.0"/><polygon points="107.8,77.3 112.5,77.3 113.4,73.3 115.8,76.4 119.3,75.7 118.1,79.1 120.8,82.0 116.9,82.5 116.1,87.9 113.4,83.2 107.0,86.2 111.7,80.3"/></g></svg></div>
<div class="lab" style="left:297px;top:376px">微信图片_20221024114108</div>
<div class="abs" style="left:279px;top:242px;width:1px;height:519px;background:#d4d7dc"></div>
<div class="abs" style="left:393px;top:246px;width:618px;height:465px;background:#f0f0f0;border:1px solid #6f6f6f"></div>
<div class="abs" style="left:394px;top:247px;width:616px;height:24px;background:#fff"></div>
<div class="lab" style="left:397px;top:252px">添加一级蒙板</div>
<svg class="abs" style="left:988.5px;top:252px" width="13" height="13" viewBox="0 0 13 13"><path d="M1.500 1.500l10 10M11.500 1.500l-10 10" stroke="#222" stroke-width="1.100" fill="none"/></svg>
<div class="abs" style="left:402px;top:280px;width:598px;height:327px;background:#fff;border:1px solid #828790;overflow:hidden">
<div class="lab" style="left:10.5px;top:36px">不使用蒙板</div>
<div class="mk" style="left:98.6px;top:2.6px"><svg viewBox="0 0 32 32" width="32" height="32"><defs><filter id="b0" x="-30%" y="-30%" width="160%" height="160%"><feGaussianBlur stdDeviation="1.2"/></filter></defs><rect width="32" height="32" fill="#000"/><circle cx="16" cy="16" r="13.500" fill="#fff" filter="url(#b0)"/></svg></div>
<div class="ml" style="left:114.6px;top:38.9px">MASK000</div>
<div class="mk" style="left:173.3px;top:2.6px"><svg viewBox="0 0 32 32" width="32" height="32"><defs><filter id="b1" x="-30%" y="-30%" width="160%" height="160%"><feGaussianBlur stdDeviation="0.5"/></filter></defs><rect width="32" height="32" fill="#000"/><circle cx="16" cy="16" r="14.200" fill="#fff" filter="url(#b1)"/></svg></div>
<div class="ml" style="left:189.3px;top:38.9px">MASK001</div>
<div class="mk" style="left:247.9px;top:2.6px"><svg viewBox="0 0 32 32" width="32" height="32"><defs><filter id="b2" x="-30%" y="-30%" width="160%" height="160%"><feGaussianBlur stdDeviation="0.5"/></filter></defs><rect width="32" height="32" fill="#000"/><rect width="32" height="32" fill="#2e2e2e"/><circle cx="16" cy="16" r="14.500" fill="#fff" filter="url(#b2)"/></svg></div>
<div class="ml" style="left:263.9px;top:38.9px">MASK002</div>
<div class="mk" style="left:322.5px;top:2.6px"><svg viewBox="0 0 32 32" width="32" height="32"><defs><filter id="b3" x="-30%" y="-30%" width="160%" height="160%"><feGaussianBlur stdDeviation="2.6"/></filter></defs><rect width="32" height="32" fill="#000"/><circle cx="16" cy="16" r="11" fill="#fff" filter="url(#b3)"/></svg></div>
<div class="ml" style="left:338.5px;top:38.9px">MASK003</div>
<div class="mk" style="left:397.1px;top:2.6px"><svg viewBox="0 0 32 32" width="32" height="32"><defs><filter id="b31" x="-30%" y="-30%" width="160%" height="160%"><feGaussianBlur stdDeviation="2.4"/></filter></defs><rect width="32" height="32" fill="#000"/><circle cx="16" cy="16" r="10.500" fill="#fff" filter="url(#b31)"/></svg></div>
<div class="ml" style="left:413.1px;top:38.9px">MASK003_1</div>
<div class="mk" style="left:471.8px;top:2.6px"><svg viewBox="0 0 32 32" width="32" height="32"><defs><filter id="b4" x="-30%" y="-30%" width="160%" height="160%"><feGaussianBlur stdDeviation="2.8"/></filter></defs><rect width="32" height="32" fill="#000"/><circle cx="16" cy="16" r="10.500" fill="#fff" filter="url(#b4)"/></svg></div>
<div class="ml" style="left:487.8px;top:38.9px">MASK004</div>
<div class="mk" style="left:24.0px;top:77.3px"><svg viewBox="0 0 32 32" width="32" height="32"><rect width="32" height="32" fill="#3a3a3a"/><rect x="1" y="1" width="30" height="30" fill="#fff"/></svg></div>
<div class="ml" style="left:40.0px;top:113.6px">MASK005</div>
<div class="mk" style="left:98.6px;top:77.3px"><svg viewBox="0 0 32 32" width="32" height="32"><rect width="32" height="32" fill="#2a2a2a"/><rect x="1" y="1" width="30" height="30" fill="#fff"/></svg></div>
<div class="ml" style="left:114.6px;top:113.6px">MASK006</div>
<div class="mk" style="left:173.3px;top:77.3px"><svg viewBox="0 0 32 32" width="32" height="32"><rect width="32" height="32" fill="#1a1a1a"/><rect x="1" y="1" width="30" height="30" fill="#fff"/></svg></div>
<div class="ml" style="left:189.3px;top:113.6px">MASK006_1</div>
<div class="mk" style="left:247.9px;top:77.3px"><svg viewBox="0 0 32 32" width="32" height="32"><rect width="32" height="32" fill="#c8c8c8"/><rect x=".7" y=".7" width="30.600" height="30.600" fill="#fff"/></svg></div>
<div class="ml" style="left:263.9px;top:113.6px">MASK006_2</div>
<div class="mk" style="left:322.5px;top:77.3px"><svg viewBox="0 0 32 32" width="32" height="32"><rect width="32" height="32" fill="#8a8a8a"/><rect x="1" y="1" width="30" height="30" fill="#f4f4f4"/><path d="M2 4h10M14 6h14M3 9h8M13 11h16M2 14h12M16 16h12M4 19h10M15 21h14M2 24h9M13 26h15M5 29h20" stroke="#c4c4c4" stroke-width=".8" stroke-dasharray="3 1.500 1.500 1"/></svg></div>
<div class="ml" style="left:338.5px;top:113.6px">MASK007</div>
<div class="mk" style="left:397.1px;top:77.3px"><svg viewBox="0 0 32 32" width="32" height="32"><defs><filter id="b8" x="-30%" y="-30%" width="160%" height="160%"><feGaussianBlur stdDeviation="0.9"/></filter></defs><rect width="32" height="32" fill="#111"/><rect x="2.500" y="2.500" width="27" height="27" fill="#fff" filter="url(#b8)"/></svg></div>
<div class="ml" style="left:413.1px;top:113.6px">MASK008</div>
<div class="mk" style="left:471.8px;top:77.3px"><svg viewBox="0 0 32 32" width="32" height="32"><defs><filter id="b81" x="-30%" y="-30%" width="160%" height="160%"><feGaussianBlur stdDeviation="0.7"/></filter></defs><rect width="32" height="32" fill="#000"/><rect x="2.300" y="2.300" width="27.400" height="27.400" fill="#fff" filter="url(#b81)"/></svg></div>
<div class="ml" style="left:487.8px;top:113.6px">MASK008_1</div>
<div class="mk" style="left:24.0px;top:151.9px"><svg viewBox="0 0 32 32" width="32" height="32"><defs><filter id="b9" x="-30%" y="-30%" width="160%" height="160%"><feGaussianBlur stdDeviation="2.2"/></filter></defs><rect width="32" height="32" fill="#000"/><rect x="5" y="5" width="22" height="22" fill="#fff" filter="url(#b9)"/></svg></div>
<div class="ml" style="left:40.0px;top:188.2px">MASK009</div>
<div class="mk" style="left:98.6px;top:151.9px"><svg viewBox="0 0 32 32" width="32" height="32"><defs><filter id="b91" x="-30%" y="-30%" width="160%" height="160%"><feGaussianBlur stdDeviation="1.8"/></filter></defs><rect width="32" height="32" fill="#000"/><rect x="5.500" y="5.500" width="21" height="21" fill="#fff" filter="url(#b91)"/></svg></div>
<div class="ml" style="left:114.6px;top:188.2px">MASK009_1</div>
<div class="mk" style="left:173.3px;top:151.9px"><svg viewBox="0 0 32 32" width="32" height="32"><rect width="32" height="32" fill="#000"/><path d="M16 3.500L28.500 16 16 28.500 3.500 16z" fill="#fff"/></svg></div>
<div class="ml" style="left:189.3px;top:188.2px">MASK010</div>
<div class="mk" style="left:247.9px;top:151.9px"><svg viewBox="0 0 32 32" width="32" height="32"><defs><filter id="b11" x="-30%" y="-30%" width="160%" height="160%"><feGaussianBlur stdDeviation="1.1"/></filter></defs><rect width="32" height="32" fill="#000"/><path d="M16 4L28 16 16 28 4 16z" fill="#fff" filter="url(#b11)"/></svg></div>
<div class="ml" style="left:263.9px;top:188.2px">MASK011</div>
<div class="mk" style="left:322.5px;top:151.9px"><svg viewBox="0 0 32 32" width="32" height="32"><defs><filter id="b12" x="-30%" y="-30%" width="160%" height="160%"><feGaussianBlur stdDeviation="2.6"/></filter></defs><rect width="32" height="32" fill="#000"/><path d="M16 3.500L28.500 16 16 28.500 3.500 16z" fill="#fff" filter="url(#b12)"/></svg></div>
<div class="ml" style="left:338.5px;top:188.2px">MASK012</div>
<div class="mk" style="left:397.1px;top:151.9px"><svg viewBox="0 0 32 32" width="32" height="32"><defs><filter id="b13" x="-30%" y="-30%" width="160%" height="160%"><feGaussianBlur stdDeviation="2.2"/></filter></defs><rect width="32" height="32" fill="#000"/><path d="M6 8c3-3 6 0 10-1s7-2 10 1c2 3 2 7 1 10 0 4-2 7-6 8-3 1-7 1-10 0-4-1-6-4-6-8-1-4-1-7 1-10z" fill="#fff" filter="url(#b13)"/></svg></div>
<div class="ml" style="left:413.1px;top:188.2px">MASK013</div>
<div class="mk" style="left:471.8px;top:151.9px"><svg viewBox="0 0 32 32" width="32" height="32"><rect width="32" height="32" fill="#000"/><path d="M16 26.500C9.500 21 5 17 5 12.200 5 8.500 7.800 6.500 10.500 6.500c2.300 0 4.500 1.500 5.500 3.500 1-2 3.200-3.500 5.500-3.500C24.200 6.500 27 8.500 27 12.200c0 4.800-4.500 8.800-11 14.300z" fill="#fff" transform="translate(16 16) scale(1.2 .95) translate(-16 -16.500)"/></svg></div>
<div class="ml" style="left:487.8px;top:188.2px">MASK014</div>
<div class="mk" style="left:24.0px;top:226.6px"><svg viewBox="0 0 32 32" width="32" height="32"><defs><filter id="b15" x="-30%" y="-30%" width="160%" height="160%"><feGaussianBlur stdDeviation="1.3"/></filter></defs><rect width="32" height="32" fill="#000"/><path d="M16 26.500C9.500 21 5 17 5 12.200 5 8.500 7.800 6.500 10.500 6.500c2.300 0 4.500 1.500 5.500 3.500 1-2 3.200-3.500 5.500-3.500C24.200 6.500 27 8.500 27 12.200c0 4.800-4.500 8.800-11 14.300z" fill="#fff" filter="url(#b15)" transform="translate(16 16) scale(1.15 .9) translate(-16 -18)"/></svg></div>
<div class="ml" style="left:40.0px;top:262.9px">MASK015</div>
<div class="mk" style="left:98.6px;top:226.6px"><svg viewBox="0 0 32 32" width="32" height="32"><defs><filter id="b16" x="-30%" y="-30%" width="160%" height="160%"><feGaussianBlur stdDeviation="2.4"/></filter></defs><rect width="32" height="32" fill="#000"/><path d="M16 26.500C9.500 21 5 17 5 12.200 5 8.500 7.800 6.500 10.500 6.500c2.300 0 4.500 1.500 5.500 3.500 1-2 3.200-3.500 5.500-3.500C24.200 6.500 27 8.500 27 12.200c0 4.800-4.500 8.800-11 14.300z" fill="#fff" opacity=".85" filter="url(#b16)" transform="translate(16 16) scale(1.1 .9) translate(-16 -18)"/></svg></div>
<div class="ml" style="left:114.6px;top:262.9px">MASK016</div>
<div class="mk" style="left:173.3px;top:226.6px"><svg viewBox="0 0 32 32" width="32" height="32"><defs><filter id="b17" x="-30%" y="-30%" width="160%" height="160%"><feGaussianBlur stdDeviation="3.8"/></filter></defs><rect width="32" height="32" fill="#000"/><ellipse cx="16" cy="16" rx="9" ry="10.500" fill="#fff" filter="url(#b17)"/></svg></div>
<div class="ml" style="left:189.3px;top:262.9px">MASK017</div>
<div class="mk" style="left:247.9px;top:226.6px"><svg viewBox="0 0 32 32" width="32" height="32"><rect width="32" height="32" fill="#000"/><circle cx="16" cy="16" r="14" fill="#e2e2e2" stroke="#9a9a9a" stroke-width=".8"/><clipPath id="c18"><circle cx="16" cy="16" r="13.500"/></clipPath><g clip-path="url(#c18)"><circle cx="9.7" cy="17.1" r=".5" fill="#9a9a9a"/><circle cx="12.9" cy="18.5" r=".5" fill="#9a9a9a"/><circle cx="19.0" cy="5.6" r=".5" fill="#9a9a9a"/><circle cx="4.3" cy="24.1" r=".5" fill="#9a9a9a"/><circle cx="10.2" cy="9.6" r=".5" fill="#9a9a9a"/><circle cx="27.9" cy="15.3" r=".5" fill="#9a9a9a"/><circle cx="24.1" cy="15.4" r=".5" fill="#9a9a9a"/><circle cx="19.3" cy="7.6" r=".5" fill="#9a9a9a"/><circle cx="19.2" cy="24.8" r=".5" fill="#9a9a9a"/><circle cx="16.6" cy="21.8" r=".5" fill="#9a9a9a"/><circle cx="20.1" cy="5.5" r=".5" fill="#9a9a9a"/><circle cx="22.2" cy="18.2" r=".5" fill="#9a9a9a"/><circle cx="11.2" cy="4.7" r=".5" fill="#9a9a9a"/><circle cx="24.8" cy="15.3" r=".5" fill="#9a9a9a"/><circle cx="21.3" cy="25.1" r=".5" fill="#9a9a9a"/><circle cx="21.1" cy="26.1" r=".5" fill="#9a9a9a"/><circle cx="13.5" cy="23.2" r=".5" fill="#9a9a9a"/><circle cx="14.7" cy="26.5" r=".5" fill="#9a9a9a"/><circle cx="25.1" cy="6.3" r=".5" fill="#9a9a9a"/><circle cx="7.3" cy="9.2" r=".5" fill="#9a9a9a"/><circle cx="27.2" cy="14.5" r=".5" fill="#9a9a9a"/><circle cx="19.0" cy="11.2" r=".5" fill="#9a9a9a"/><circle cx="16.2" cy="13.3" r=".5" fill="#9a9a9a"/><circle cx="12.4" cy="18.0" r=".5" fill="#9a9a9a"/><circle cx="18.0" cy="25.7" r=".5" fill="#9a9a9a"/><circle cx="20.4" cy="26.3" r=".5" fill="#9a9a9a"/><circle cx="24.6" cy="27.8" r=".5" fill="#9a9a9a"/><circle cx="20.1" cy="7.9" r=".5" fill="#9a9a9a"/><circle cx="24.7" cy="27.2" r=".5" fill="#9a9a9a"/><circle cx="25.7" cy="17.7" r=".5" fill="#9a9a9a"/><circle cx="21.1" cy="9.1" r=".5" fill="#9a9a9a"/><circle cx="24.0" cy="17.8" r=".5" fill="#9a9a9a"/><circle cx="10.8" cy="5.5" r=".5" fill="#9a9a9a"/><circle cx="24.5" cy="27.8" r=".5" fill="#9a9a9a"/><circle cx="6.1" cy="23.2" r=".5" fill="#9a9a9a"/><circle cx="13.9" cy="7.6" r=".5" fill="#9a9a9a"/><circle cx="11.1" cy="22.5" r=".5" fill="#9a9a9a"/><circle cx="24.9" cy="5.1" r=".5" fill="#9a9a9a"/><circle cx="18.7" cy="5.1" r=".5" fill="#9a9a9a"/><circle cx="21.2" cy="11.9" r=".5" fill="#9a9a9a"/><circle cx="25.1" cy="27.5" r=".5" fill="#9a9a9a"/><circle cx="16.1" cy="28.0" r=".5" fill="#9a9a9a"/><circle cx="11.4" cy="5.8" r=".5" fill="#9a9a9a"/><circle cx="18.4" cy="4.8" r=".5" fill="#9a9a9a"/><circle cx="8.7" cy="13.8" r=".5" fill="#9a9a9a"/><circle cx="18.7" cy="7.7" r=".5" fill="#9a9a9a"/><circle cx="5.0" cy="24.8" r=".5" fill="#9a9a9a"/><circle cx="11.5" cy="27.0" r=".5" fill="#9a9a9a"/><circle cx="25.5" cy="13.1" r=".5" fill="#9a9a9a"/><circle cx="15.0" cy="16.5" r=".5" fill="#9a9a9a"/><circle cx="19.5" cy="18.3" r=".5" fill="#9a9a9a"/><circle cx="17.4" cy="18.9" r=".5" fill="#9a9a9a"/><circle cx="26.6" cy="16.2" r=".5" fill="#9a9a9a"/><circle cx="14.3" cy="21.3" r=".5" fill="#9a9a9a"/><circle cx="9.7" cy="11.2" r=".5" fill="#9a9a9a"/><circle cx="27.5" cy="16.5" r=".5" fill="#9a9a9a"/><circle cx="17.2" cy="4.3" r=".5" fill="#9a9a9a"/><circle cx="14.0" cy="17.9" r=".5" fill="#9a9a9a"/><circle cx="4.5" cy="18.8" r=".5" fill="#9a9a9a"/><circle cx="19.2" cy="5.4" r=".5" fill="#9a9a9a"/><circle cx="19.1" cy="15.2" r=".5" fill="#9a9a9a"/><circle cx="20.3" cy="12.5" r=".5" fill="#9a9a9a"/><circle cx="21.0" cy="21.7" r=".5" fill="#9a9a9a"/><circle cx="4.5" cy="5.5" r=".5" fill="#9a9a9a"/><circle cx="20.2" cy="27.1" r=".5" fill="#9a9a9a"/><circle cx="10.0" cy="15.0" r=".5" fill="#9a9a9a"/><circle cx="18.2" cy="11.7" r=".5" fill="#9a9a9a"/><circle cx="12.7" cy="11.5" r=".5" fill="#9a9a9a"/><circle cx="12.9" cy="18.3" r=".5" fill="#9a9a9a"/><circle cx="11.2" cy="13.1" r=".5" fill="#9a9a9a"/></g></svg></div>
<div class="ml" style="left:263.9px;top:262.9px">MASK018</div>
<div class="mk" style="left:322.5px;top:226.6px"><svg viewBox="0 0 32 32" width="32" height="32"><defs><filter id="b19" x="-30%" y="-30%" width="160%" height="160%"><feGaussianBlur stdDeviation="1.3"/></filter></defs><rect width="32" height="32" fill="#000"/><rect x="4" y="4" width="24" height="24" fill="#dedede" filter="url(#b19)"/><circle cx="9.7" cy="17.1" r=".45" fill="#9a9a9a"/><circle cx="12.9" cy="18.5" r=".45" fill="#9a9a9a"/><circle cx="19.0" cy="5.6" r=".45" fill="#9a9a9a"/><circle cx="4.3" cy="24.1" r=".45" fill="#9a9a9a"/><circle cx="10.2" cy="9.6" r=".45" fill="#9a9a9a"/><circle cx="27.9" cy="15.3" r=".45" fill="#9a9a9a"/><circle cx="24.1" cy="15.4" r=".45" fill="#9a9a9a"/><circle cx="19.3" cy="7.6" r=".45" fill="#9a9a9a"/><circle cx="19.2" cy="24.8" r=".45" fill="#9a9a9a"/><circle cx="16.6" cy="21.8" r=".45" fill="#9a9a9a"/><circle cx="20.1" cy="5.5" r=".45" fill="#9a9a9a"/><circle cx="22.2" cy="18.2" r=".45" fill="#9a9a9a"/><circle cx="11.2" cy="4.7" r=".45" fill="#9a9a9a"/><circle cx="24.8" cy="15.3" r=".45" fill="#9a9a9a"/><circle cx="21.3" cy="25.1" r=".45" fill="#9a9a9a"/><circle cx="21.1" cy="26.1" r=".45" fill="#9a9a9a"/><circle cx="13.5" cy="23.2" r=".45" fill="#9a9a9a"/><circle cx="14.7" cy="26.5" r=".45" fill="#9a9a9a"/><circle cx="25.1" cy="6.3" r=".45" fill="#9a9a9a"/><circle cx="7.3" cy="9.2" r=".45" fill="#9a9a9a"/><circle cx="27.2" cy="14.5" r=".45" fill="#9a9a9a"/><circle cx="19.0" cy="11.2" r=".45" fill="#9a9a9a"/><circle cx="16.2" cy="13.3" r=".45" fill="#9a9a9a"/><circle cx="12.4" cy="18.0" r=".45" fill="#9a9a9a"/><circle cx="18.0" cy="25.7" r=".45" fill="#9a9a9a"/><circle cx="20.4" cy="26.3" r=".45" fill="#9a9a9a"/><circle cx="24.6" cy="27.8" r=".45" fill="#9a9a9a"/><circle cx="20.1" cy="7.9" r=".45" fill="#9a9a9a"/><circle cx="24.7" cy="27.2" r=".45" fill="#9a9a9a"/><circle cx="25.7" cy="17.7" r=".45" fill="#9a9a9a"/><circle cx="21.1" cy="9.1" r=".45" fill="#9a9a9a"/><circle cx="24.0" cy="17.8" r=".45" fill="#9a9a9a"/><circle cx="10.8" cy="5.5" r=".45" fill="#9a9a9a"/><circle cx="24.5" cy="27.8" r=".45" fill="#9a9a9a"/><circle cx="6.1" cy="23.2" r=".45" fill="#9a9a9a"/><circle cx="13.9" cy="7.6" r=".45" fill="#9a9a9a"/><circle cx="11.1" cy="22.5" r=".45" fill="#9a9a9a"/><circle cx="24.9" cy="5.1" r=".45" fill="#9a9a9a"/><circle cx="18.7" cy="5.1" r=".45" fill="#9a9a9a"/><circle cx="21.2" cy="11.9" r=".45" fill="#9a9a9a"/><circle cx="25.1" cy="27.5" r=".45" fill="#9a9a9a"/><circle cx="16.1" cy="28.0" r=".45" fill="#9a9a9a"/><circle cx="11.4" cy="5.8" r=".45" fill="#9a9a9a"/><circle cx="18.4" cy="4.8" r=".45" fill="#9a9a9a"/><circle cx="8.7" cy="13.8" r=".45" fill="#9a9a9a"/><circle cx="18.7" cy="7.7" r=".45" fill="#9a9a9a"/><circle cx="5.0" cy="24.8" r=".45" fill="#9a9a9a"/><circle cx="11.5" cy="27.0" r=".45" fill="#9a9a9a"/><circle cx="25.5" cy="13.1" r=".45" fill="#9a9a9a"/><circle cx="15.0" cy="16.5" r=".45" fill="#9a9a9a"/><circle cx="19.5" cy="18.3" r=".45" fill="#9a9a9a"/><circle cx="17.4" cy="18.9" r=".45" fill="#9a9a9a"/><circle cx="26.6" cy="16.2" r=".45" fill="#9a9a9a"/><circle cx="14.3" cy="21.3" r=".45" fill="#9a9a9a"/><circle cx="9.7" cy="11.2" r=".45" fill="#9a9a9a"/><circle cx="27.5" cy="16.5" r=".45" fill="#9a9a9a"/><circle cx="17.2" cy="4.3" r=".45" fill="#9a9a9a"/><circle cx="14.0" cy="17.9" r=".45" fill="#9a9a9a"/><circle cx="4.5" cy="18.8" r=".45" fill="#9a9a9a"/><circle cx="19.2" cy="5.4" r=".45" fill="#9a9a9a"/><circle cx="19.1" cy="15.2" r=".45" fill="#9a9a9a"/><circle cx="20.3" cy="12.5" r=".45" fill="#9a9a9a"/><circle cx="21.0" cy="21.7" r=".45" fill="#9a9a9a"/><circle cx="4.5" cy="5.5" r=".45" fill="#9a9a9a"/><circle cx="20.2" cy="27.1" r=".45" fill="#9a9a9a"/><circle cx="10.0" cy="15.0" r=".45" fill="#9a9a9a"/><circle cx="18.2" cy="11.7" r=".45" fill="#9a9a9a"/><circle cx="12.7" cy="11.5" r=".45" fill="#9a9a9a"/><circle cx="12.9" cy="18.3" r=".45" fill="#9a9a9a"/><circle cx="11.2" cy="13.1" r=".45" fill="#9a9a9a"/></svg></div>
<div class="ml" style="left:338.5px;top:262.9px">MASK019</div>
<div class="mk" style="left:397.1px;top:226.6px"><svg viewBox="0 0 32 32" width="32" height="32"><defs><filter id="b20" x="-30%" y="-30%" width="160%" height="160%"><feGaussianBlur stdDeviation="0.4"/></filter></defs><rect width="32" height="32" fill="#000"/><g filter="url(#b20)"><polygon points="27.4,16.0 29.0,17.7 28.5,19.3 26.8,20.5 26.6,22.1 25.7,23.4 25.0,25.0 23.9,26.3 21.7,25.8 20.3,26.3 19.4,28.7 17.6,28.0 16.0,28.9 14.6,27.0 12.9,27.8 11.1,27.9 10.2,26.1 7.9,26.6 6.6,25.4 7.1,22.8 6.3,21.6 4.5,20.7 3.1,19.5 4.1,17.6 4.4,16.0 4.0,14.4 5.2,13.1 5.3,11.5 5.5,9.9 6.2,8.5 7.8,7.8 8.9,6.8 10.2,5.9 11.3,4.7 12.9,4.6 14.5,4.9 16.0,2.9 17.6,3.7 19.3,3.8 20.4,5.3 22.7,4.3 24.0,5.6 24.1,7.9 25.4,8.8 27.1,9.6 27.8,11.1 28.9,12.5 28.0,14.4" fill="#fff"/></g></svg></div>
<div class="ml" style="left:413.1px;top:262.9px">MASK020</div>
<div class="mk" style="left:471.8px;top:226.6px"><svg viewBox="0 0 32 32" width="32" height="32"><rect width="32" height="32" fill="#000"/><polygon points="29.9,16.0 29.8,17.8 26.3,18.8 26.0,20.1 27.7,22.8 26.4,24.0 25.1,25.1 23.1,25.2 22.3,27.0 20.9,27.7 19.3,28.2 17.4,27.0 16.0,28.1 14.4,27.8 12.6,28.7 10.6,29.0 9.0,28.1 8.4,25.9 7.4,24.6 6.9,23.0 6.8,21.3 6.2,20.1 4.2,19.2 4.5,17.5 4.1,16.0 2.4,14.2 4.0,12.8 4.4,11.2 6.2,10.3 7.6,9.6 7.7,7.7 9.3,7.3 9.8,5.3 10.6,3.0 12.7,3.5 14.5,4.9 16.0,2.3 17.7,2.7 19.4,3.3 21.3,3.3 22.6,4.5 24.1,5.4 24.3,7.7 27.1,7.5 28.1,9.0 26.2,11.8 28.8,12.6 29.0,14.3" fill="#fff"/></svg></div>
<div class="ml" style="left:487.8px;top:262.9px">MASK021</div>
<div class="mk" style="left:24.0px;top:301.3px"><svg viewBox="0 0 32 32" width="32" height="32"><defs><filter id="b22" x="-30%" y="-30%" width="160%" height="160%"><feGaussianBlur stdDeviation="0.8"/></filter></defs><rect width="32" height="32" fill="#000"/><circle cx="16" cy="17" r="14.500" fill="#c8c8c8"/><circle cx="16" cy="18" r="12.500" fill="#fff" filter="url(#b22)"/></svg></div>
<div class="mk" style="left:98.6px;top:301.3px"><svg viewBox="0 0 32 32" width="32" height="32"><rect width="32" height="32" fill="#000"/><polygon points="1.8,2.4 3.8,2.1 5.9,2.8 7.9,2.2 9.9,2.0 11.9,2.8 14.0,3.9 16.0,3.7 18.0,3.6 20.1,2.4 22.1,3.1 24.1,2.5 26.1,2.3 28.2,2.1 29.6,3.0 31.1,5.2 30.9,7.4 30.9,9.6 30.9,11.9 29.5,14.1 29.8,16.3 30.5,18.5 30.7,20.7 31.0,22.9 31.0,25.1 29.3,27.4 30.4,29.6 30.6,31.8 30.2,34.0 28.2,33.3 26.1,33.9 24.1,33.1 22.1,35.0 20.1,34.8 18.0,34.1 16.0,33.6 14.0,34.9 11.9,34.2 9.9,34.8 7.9,34.8 5.9,34.0 3.8,33.8 2.0,34.0 1.6,31.8 1.1,29.6 1.4,27.4 2.5,25.1 0.8,22.9 0.8,20.7 2.1,18.5 1.3,16.3 1.9,14.1 1.7,11.9 1.5,9.6 2.9,7.4 1.1,5.2" fill="#fff"/></svg></div>
<div class="mk" style="left:173.3px;top:301.3px"><svg viewBox="0 0 32 32" width="32" height="32"><rect width="32" height="32" fill="#000"/><path d="M5 14c2-6 8-10 14-10 5 0 9 2 10 5-3 0-5 1-6 3 3-1 6 0 7 3-1 5-5 9-10 12l-3 6H8c-3-5-5-12-3-19z" fill="#fff"/><path d="M8 20l10-9M10 25l12-10" stroke="#000" stroke-width="1.300"/></svg></div>
<div class="mk" style="left:247.9px;top:301.3px"><svg viewBox="0 0 32 32" width="32" height="32"><rect width="32" height="32" fill="#000"/><polygon points="4.0,5.4 5.7,5.5 7.4,4.5 9.1,3.7 10.9,2.9 12.6,5.0 14.3,4.4 16.0,5.3 17.7,4.1 19.4,5.4 21.1,3.8 22.9,5.5 24.6,5.2 26.3,4.2 28.1,4.5 28.6,6.6 27.0,8.7 28.2,10.8 29.0,12.9 27.2,15.0 29.0,17.1 28.6,19.2 29.1,21.4 27.5,23.5 26.7,25.6 29.0,27.7 29.0,29.8 27.8,31.9 28.0,32.7 26.3,33.0 24.6,34.4 22.9,33.3 21.1,35.4 19.4,34.3 17.7,33.0 16.0,34.5 14.3,33.6 12.6,35.4 10.9,35.3 9.1,34.0 7.4,34.5 5.7,34.6 5.0,34.0 5.5,31.9 2.5,29.8 3.6,27.7 4.3,25.6 3.4,23.5 4.3,21.4 2.7,19.2 5.2,17.1 4.1,15.0 2.8,12.9 4.5,10.8 3.4,8.7 3.0,6.6" fill="#fff"/></svg></div>
<div class="mk" style="left:322.5px;top:301.3px"><svg viewBox="0 0 32 32" width="32" height="32"><rect width="32" height="32" fill="#8a8a8a"/><polygon points="2.5,2.6 4.4,2.3 6.4,3.3 8.3,2.1 10.2,3.1 12.1,2.7 14.1,2.1 16.0,3.0 17.9,2.1 19.9,2.9 21.8,2.1 23.7,2.2 25.6,2.8 27.6,3.7 28.7,3.0 28.9,5.2 29.8,7.4 30.4,9.6 29.7,11.9 29.3,14.1 30.5,16.3 28.6,18.5 30.2,20.7 29.1,22.9 28.8,25.1 28.7,27.4 29.1,29.6 30.1,31.8 29.5,33.4 27.6,34.2 25.6,34.3 23.7,33.7 21.8,34.1 19.9,33.1 17.9,33.1 16.0,33.4 14.1,34.4 12.1,33.9 10.2,33.6 8.3,34.2 6.4,33.9 4.4,33.6 3.1,34.0 2.9,31.8 2.0,29.6 2.6,27.4 2.6,25.1 3.3,22.9 3.0,20.7 2.1,18.5 3.5,16.3 1.7,14.1 2.3,11.9 3.0,9.6 1.8,7.4 2.5,5.2" fill="#fff"/></svg></div>
<div class="mk" style="left:397.1px;top:301.3px"><svg viewBox="0 0 32 32" width="32" height="32"><rect width="32" height="32" fill="#000"/><polygon points="28.9,20.0 22.7,21.1 27.0,23.6 23.6,23.9 24.9,26.5 21.1,25.1 24.6,31.8 18.6,25.2 20.1,32.6 17.2,27.6 16.0,31.2 14.9,26.7 11.7,33.1 12.8,26.3 7.8,31.2 11.7,24.3 6.3,27.0 10.8,22.7 3.6,24.0 7.4,21.4 2.6,20.0 7.9,18.7 4.1,16.1 8.8,16.3 6.8,13.3 11.4,15.4 7.9,8.9 12.3,12.8 12.1,7.9 15.1,14.3 16.0,7.9 17.0,13.8 19.7,8.5 19.8,12.6 22.9,10.5 22.1,13.9 27.7,11.5 21.1,17.4 27.9,16.1 23.1,18.9" fill="#fff"/><circle cx="16" cy="20" r="7.500" fill="#fff"/></svg></div>
<div class="mk" style="left:471.8px;top:301.3px"><svg viewBox="0 0 32 32" width="32" height="32"><defs><filter id="b28" x="-30%" y="-30%" width="160%" height="160%"><feGaussianBlur stdDeviation="0.9"/></filter></defs><rect width="32" height="32" fill="#000"/><circle cx="16" cy="18" r="14" fill="#8a8a8a" filter="url(#b28)"/><circle cx="16" cy="19" r="11.500" fill="#fff" filter="url(#b28)"/></svg></div>
<div class="abs" style="left:579px;top:1px;width:16px;height:323px;background:#f0f0f0"></div>
<div class="abs" style="left:579px;top:17.400px;width:15px;height:178px;background:#cdcdcd"></div>
<svg class="abs" style="left:579px;top:0" width="17" height="325" viewBox="0 0 17 325"><g stroke="#555" stroke-width="2.300" fill="none"><path d="M3.900 12l3.500-4 3.500 4"/><path d="M3.900 313.400l3.500 4 3.500-4"/></g></svg>
</div>
<div class="abs" style="left:402px;top:628px;width:13px;height:13px;border:1px solid #333;border-radius:50%;background:#fff"></div>
<div class="abs" style="left:405px;top:631px;width:7px;height:7px;border-radius:50%;background:#222"></div>
<div class="lab serif" style="left:419px;top:626px;font-weight:bold;font-size:15px;line-height:18px">替换原有的蒙板</div>
<div class="abs" style="left:545px;top:628px;width:13px;height:13px;border:1px solid #333;border-radius:50%;background:#fff"></div>
<div class="lab serif" style="left:562px;top:626px;font-weight:bold;font-size:15px;line-height:18px">与原有的蒙板混合</div>
<div class="abs" style="left:706px;top:666px;width:110px;height:30px;border:2px solid #0078d7;background:#e1e1e1"></div>
<div class="abs" style="left:708px;top:668px;width:106px;height:26px;border:1px dotted #333"></div>
<svg class="abs" style="left:728px;top:672px" width="20" height="18" viewBox="0 0 20 18"><path d="M3 9.500l4.500 5L17 2.500" stroke="#0c5a0c" stroke-width="4" fill="none" stroke-linejoin="round"/><path d="M3 9.500l4.500 5L17 2.500" stroke="#22a022" stroke-width="2.400" fill="none" stroke-linejoin="round"/></svg>
<div class="lab" style="left:751px;top:675px;font-family:'Liberation Mono','Noto Serif CJK SC',monospace;font-size:12px">确定<span style="letter-spacing:-1.2px">(<u>T</u>)</span></div>
<div class="abs" style="left:873px;top:666px;width:110px;height:30px;border:1px solid #adadad;background:#e1e1e1"></div>
<svg class="abs" style="left:898px;top:674px" width="15" height="15" viewBox="0 0 15 15"><path d="M2 2l10.500 10.500M12.500 2L2 12.500" stroke="#e04a2e" stroke-width="3" fill="none"/></svg>
<div class="lab" style="left:918px;top:675px;font-family:'Liberation Mono','Noto Serif CJK SC',monospace;font-size:12px">取消<span style="letter-spacing:-1.2px">(<u>C</u>)</span></div>
</body></html>
